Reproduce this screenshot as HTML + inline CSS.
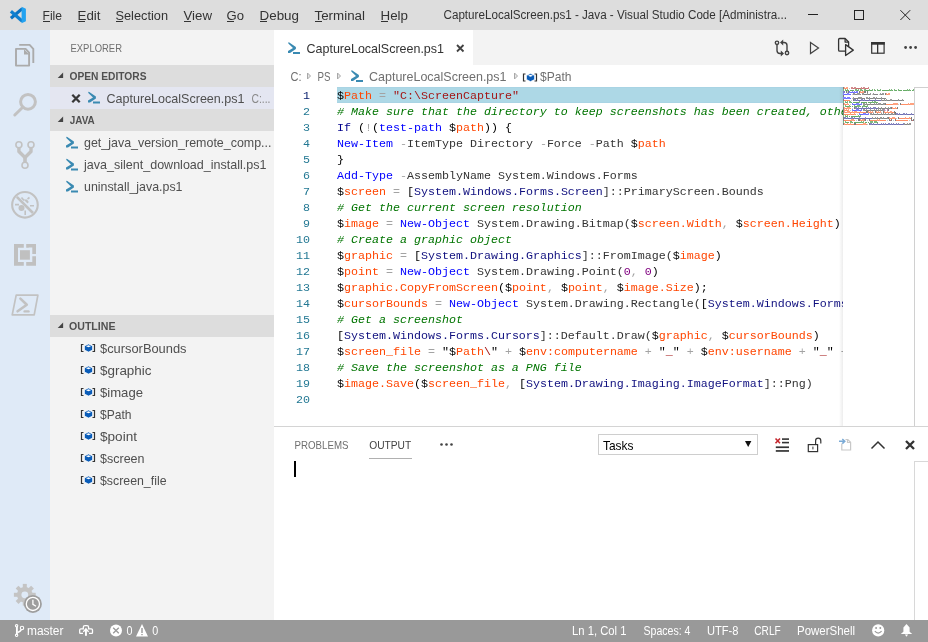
<!DOCTYPE html>
<html><head><meta charset="utf-8"><title>VS Code</title>
<style>html,body{margin:0;padding:0;width:928px;height:642px;overflow:hidden;background:#fff;font-family:"Liberation Sans",sans-serif}</style>
</head><body>
<svg width="928" height="642" viewBox="0 0 928 642" style="display:block;will-change:transform"><rect x="0" y="0" width="928" height="30" fill="#dddddd" />
<rect x="0" y="30" width="50" height="590" fill="#dfeaf7" />
<rect x="50" y="30" width="224" height="590" fill="#f3f3f3" />
<rect x="274" y="30" width="654" height="35" fill="#f3f3f3" />
<rect x="274" y="30" width="199" height="35" fill="#ffffff" />
<rect x="274" y="65" width="654" height="361" fill="#ffffff" />
<rect x="274" y="426" width="654" height="194" fill="#ffffff" />
<rect x="274" y="426" width="654" height="1" fill="#d4d4d4" />
<rect x="0" y="620" width="928" height="22" fill="#999999" />
<g stroke-linecap="butt"><path d="M10.9 18.2 L22.3 8.6" stroke="#0a73c2" stroke-width="3.2"/><path d="M10.9 11.3 L22.3 21.2" stroke="#0e7fd0" stroke-width="3.2"/><path d="M10.2 11.2 L12.8 10 L13.6 13.2 L11.6 14.6 Z M10.2 18.4 L12.8 19.8 L13.6 16.6 L11.6 15.2 Z" fill="#0a6fbd" opacity="0"/><path d="M21.6 6.8 L25.9 8.8 L25.9 21.2 L21.6 23.2 Z" fill="#22a2f0"/></g>
<text x="42.5" y="19.5" font-size="12" fill="#333333" font-family="'Liberation Sans', sans-serif" textLength="19.5" lengthAdjust="spacingAndGlyphs" >File</text>
<rect x="43" y="21" width="7" height="1" fill="#333333"/>
<text x="77.5" y="19.5" font-size="12" fill="#333333" font-family="'Liberation Sans', sans-serif" textLength="23" lengthAdjust="spacingAndGlyphs" >Edit</text>
<rect x="78" y="21" width="7" height="1" fill="#333333"/>
<text x="115.5" y="19.5" font-size="12" fill="#333333" font-family="'Liberation Sans', sans-serif" textLength="52.5" lengthAdjust="spacingAndGlyphs" >Selection</text>
<rect x="116" y="21" width="7" height="1" fill="#333333"/>
<text x="183.5" y="19.5" font-size="12" fill="#333333" font-family="'Liberation Sans', sans-serif" textLength="28.5" lengthAdjust="spacingAndGlyphs" >View</text>
<rect x="184" y="21" width="7" height="1" fill="#333333"/>
<text x="226.5" y="19.5" font-size="12" fill="#333333" font-family="'Liberation Sans', sans-serif" textLength="17.5" lengthAdjust="spacingAndGlyphs" >Go</text>
<rect x="227" y="21" width="7" height="1" fill="#333333"/>
<text x="259.5" y="19.5" font-size="12" fill="#333333" font-family="'Liberation Sans', sans-serif" textLength="39.5" lengthAdjust="spacingAndGlyphs" >Debug</text>
<rect x="260" y="21" width="7" height="1" fill="#333333"/>
<text x="314.5" y="19.5" font-size="12" fill="#333333" font-family="'Liberation Sans', sans-serif" textLength="50.5" lengthAdjust="spacingAndGlyphs" >Terminal</text>
<rect x="315" y="21" width="7" height="1" fill="#333333"/>
<text x="380.5" y="19.5" font-size="12" fill="#333333" font-family="'Liberation Sans', sans-serif" textLength="27.5" lengthAdjust="spacingAndGlyphs" >Help</text>
<rect x="381" y="21" width="7" height="1" fill="#333333"/>
<text x="443.5" y="19.3" font-size="12" fill="#333333" font-family="'Liberation Sans', sans-serif" textLength="343.5" lengthAdjust="spacingAndGlyphs" >CaptureLocalScreen.ps1 - Java - Visual Studio Code [Administra...</text>
<rect x="808" y="14" width="10" height="1" fill="#222222" />
<rect x="854.5" y="10.5" width="9" height="9" fill="none" stroke="#222222" stroke-width="1"/>
<path d="M900.4 10.2 L910.2 20 M910.2 10.2 L900.4 20" stroke="#222222" stroke-width="1"/>
<g fill="none" stroke="#ababab" stroke-width="1.9" stroke-linejoin="round"><path d="M16 48.9 H25.6 L29.1 52.6 V65.6 H16 Z"/><path d="M19.2 44.9 H29.6 L33.3 48.8 V63"/></g><path d="M24 49.3 V54.6 H29.3 Z" fill="#ababab"/>
<g fill="none" stroke="#c2c2c2" stroke-width="3"><circle cx="28" cy="101.8" r="7.4"/><path d="M23 107 L14.8 115" stroke-linecap="round"/></g>
<g fill="none" stroke="#c2c2c2"><g stroke-width="1.6"><circle cx="18.9" cy="144.8" r="3"/><circle cx="31" cy="144.8" r="3"/><circle cx="25" cy="165.3" r="3"/></g><path d="M18.9 147.8 V151.5 L25 157.5 L31 151.5 V147.8" stroke-width="3.4" stroke-linejoin="round"/><path d="M25 156 V162.5" stroke-width="3.6"/></g>
<g fill="none" stroke="#c2c2c2" stroke-width="2.1"><circle cx="24.95" cy="204.8" r="12.8"/><path d="M16.8 196.8 L33 213" stroke-width="2.6"/></g>
<g fill="#c2c2c2"><circle cx="21.5" cy="208" r="3"/><path d="M23.5 199.5 L27.5 203.5 L28.8 202 L27 199.5 Z"/><path d="M27.5 199 L29.5 197.5 M21.5 197.5 L24 200.5 M15 204.6 H19 M30 205.8 H34 M25.2 210.5 V215" stroke="#c2c2c2" stroke-width="1.6" fill="none"/></g>
<g fill="#c0c0c0"><path d="M14 244.1 H23.8 V247.8 H18 V262.1 H23.8 V265.8 H14 Z"/><path d="M26.2 244.1 H36 V253.9 H32.3 V247.5 H28.8 V247.8 H26.2 Z"/><path d="M32.3 256.3 H36 V265.8 H26.2 V262.1 H32.3 Z"/><rect x="20" y="250.2" width="9.9" height="9.5"/></g>
<g fill="none" stroke="#c2c2c2" stroke-linejoin="round" stroke-linecap="round"><path d="M16.2 295.2 H37.9 L34.2 314.8 H12.2 Z" stroke-width="1.7"/><path d="M20.4 298.6 L26.8 304.7 L17.6 311.3" stroke-width="2.6"/><path d="M24.6 311.4 H28.5" stroke-width="2.4"/></g>
<g fill="#c4c4c4"><rect x="22.8" y="583.9" width="4" height="5" transform="rotate(0 24.8 594.8)"/><rect x="22.8" y="583.9" width="4" height="5" transform="rotate(45 24.8 594.8)"/><rect x="22.8" y="583.9" width="4" height="5" transform="rotate(90 24.8 594.8)"/><rect x="22.8" y="583.9" width="4" height="5" transform="rotate(135 24.8 594.8)"/><rect x="22.8" y="583.9" width="4" height="5" transform="rotate(180 24.8 594.8)"/><rect x="22.8" y="583.9" width="4" height="5" transform="rotate(225 24.8 594.8)"/><rect x="22.8" y="583.9" width="4" height="5" transform="rotate(270 24.8 594.8)"/><rect x="22.8" y="583.9" width="4" height="5" transform="rotate(315 24.8 594.8)"/><circle cx="24.8" cy="594.8" r="7.8"/></g><circle cx="24.8" cy="594.8" r="3.4" fill="#dfeaf7"/>
<circle cx="32.9" cy="603.9" r="9.6" fill="#dfeaf7" opacity="0.0"/><circle cx="32.9" cy="603.9" r="9" fill="#9e9e9e"/><circle cx="32.9" cy="603.9" r="6.6" fill="none" stroke="#ffffff" stroke-width="1.3"/><path d="M32.9 599.8 V604.3 L36 606.3" fill="none" stroke="#fff" stroke-width="1.3"/>
<text x="70.5" y="52.2" font-size="11" fill="#6f6f6f" font-family="'Liberation Sans', sans-serif" textLength="51.5" lengthAdjust="spacingAndGlyphs" >EXPLORER</text>
<rect x="50" y="65" width="224" height="22" fill="#dddddd" />
<path d="M57.7 78 L63.1 72.6 L63.1 78 Z" fill="#444444"/>
<text x="69.5" y="79.8" font-size="11" fill="#505050" font-family="'Liberation Sans', sans-serif" font-weight="bold" textLength="77" lengthAdjust="spacingAndGlyphs" >OPEN EDITORS</text>
<rect x="50" y="87" width="224" height="22" fill="#e4e6f1" />
<path d="M72.3 94.8 L79.7 102.2 M79.7 94.8 L72.3 102.2" stroke="#383838" stroke-width="2.3"/>
<g transform="translate(88,91.5)" fill="#3a8ab2"><path d="M0.3 0.2 L1.3 0.4 L7.9 5.1 L7.9 7.0 L2.0 10.9 L0 10.9 L0 8.9 L5.0 6.0 L0.3 1.6 Z"/><rect x="5" y="10" width="7" height="2"/></g>
<text x="106.5" y="103" font-size="13" fill="#4f4f4f" font-family="'Liberation Sans', sans-serif" textLength="138" lengthAdjust="spacingAndGlyphs" >CaptureLocalScreen.ps1</text>
<text x="251.5" y="103" font-size="13" fill="#8a8a8a" font-family="'Liberation Sans', sans-serif" textLength="19" lengthAdjust="spacingAndGlyphs" >C:...</text>
<rect x="50" y="109" width="224" height="22" fill="#dddddd" />
<path d="M57.7 122 L63.1 116.6 L63.1 122 Z" fill="#444444"/>
<text x="69.8" y="123.8" font-size="11" fill="#505050" font-family="'Liberation Sans', sans-serif" font-weight="bold" textLength="25" lengthAdjust="spacingAndGlyphs" >JAVA</text>
<g transform="translate(66,136.5)" fill="#3a8ab2"><path d="M0.3 0.2 L1.3 0.4 L7.9 5.1 L7.9 7.0 L2.0 10.9 L0 10.9 L0 8.9 L5.0 6.0 L0.3 1.6 Z"/><rect x="5" y="10" width="7" height="2"/></g>
<text x="84" y="147" font-size="13" fill="#4f4f4f" font-family="'Liberation Sans', sans-serif" textLength="187.5" lengthAdjust="spacingAndGlyphs" >get_java_version_remote_comp...</text>
<g transform="translate(66,158.5)" fill="#3a8ab2"><path d="M0.3 0.2 L1.3 0.4 L7.9 5.1 L7.9 7.0 L2.0 10.9 L0 10.9 L0 8.9 L5.0 6.0 L0.3 1.6 Z"/><rect x="5" y="10" width="7" height="2"/></g>
<text x="84" y="169" font-size="13" fill="#4f4f4f" font-family="'Liberation Sans', sans-serif" textLength="182.5" lengthAdjust="spacingAndGlyphs" >java_silent_download_install.ps1</text>
<g transform="translate(66,180.5)" fill="#3a8ab2"><path d="M0.3 0.2 L1.3 0.4 L7.9 5.1 L7.9 7.0 L2.0 10.9 L0 10.9 L0 8.9 L5.0 6.0 L0.3 1.6 Z"/><rect x="5" y="10" width="7" height="2"/></g>
<text x="84" y="191" font-size="13" fill="#4f4f4f" font-family="'Liberation Sans', sans-serif" textLength="98.5" lengthAdjust="spacingAndGlyphs" >uninstall_java.ps1</text>
<rect x="50" y="315" width="224" height="22" fill="#dddddd" />
<path d="M57.7 328 L63.1 322.6 L63.1 328 Z" fill="#444444"/>
<text x="69" y="329.8" font-size="11" fill="#505050" font-family="'Liberation Sans', sans-serif" font-weight="bold" textLength="46.5" lengthAdjust="spacingAndGlyphs" >OUTLINE</text>
<g transform="translate(81,344)"><path d="M2.5 0.5 H0.5 V7.5 H2.5 M11.5 0.5 H13.5 V7.5 H11.5" fill="none" stroke="#333" stroke-width="1.2"/><path d="M3.5 2 L7.5 0 L11.5 2 V6 L7.5 8 L3.5 6 Z" fill="#0a5cb8" stroke="#fff" stroke-width="0.6"/><path d="M5 2.2 L7.5 1.2 L10 2.2 L7.5 3.2 Z" fill="#fff"/></g>
<text x="100" y="352.8" font-size="13" fill="#4f4f4f" font-family="'Liberation Sans', sans-serif" textLength="86.5" lengthAdjust="spacingAndGlyphs" >$cursorBounds</text>
<g transform="translate(81,366)"><path d="M2.5 0.5 H0.5 V7.5 H2.5 M11.5 0.5 H13.5 V7.5 H11.5" fill="none" stroke="#333" stroke-width="1.2"/><path d="M3.5 2 L7.5 0 L11.5 2 V6 L7.5 8 L3.5 6 Z" fill="#0a5cb8" stroke="#fff" stroke-width="0.6"/><path d="M5 2.2 L7.5 1.2 L10 2.2 L7.5 3.2 Z" fill="#fff"/></g>
<text x="100" y="374.8" font-size="13" fill="#4f4f4f" font-family="'Liberation Sans', sans-serif" textLength="51.5" lengthAdjust="spacingAndGlyphs" >$graphic</text>
<g transform="translate(81,388)"><path d="M2.5 0.5 H0.5 V7.5 H2.5 M11.5 0.5 H13.5 V7.5 H11.5" fill="none" stroke="#333" stroke-width="1.2"/><path d="M3.5 2 L7.5 0 L11.5 2 V6 L7.5 8 L3.5 6 Z" fill="#0a5cb8" stroke="#fff" stroke-width="0.6"/><path d="M5 2.2 L7.5 1.2 L10 2.2 L7.5 3.2 Z" fill="#fff"/></g>
<text x="100" y="396.8" font-size="13" fill="#4f4f4f" font-family="'Liberation Sans', sans-serif" textLength="43" lengthAdjust="spacingAndGlyphs" >$image</text>
<g transform="translate(81,410)"><path d="M2.5 0.5 H0.5 V7.5 H2.5 M11.5 0.5 H13.5 V7.5 H11.5" fill="none" stroke="#333" stroke-width="1.2"/><path d="M3.5 2 L7.5 0 L11.5 2 V6 L7.5 8 L3.5 6 Z" fill="#0a5cb8" stroke="#fff" stroke-width="0.6"/><path d="M5 2.2 L7.5 1.2 L10 2.2 L7.5 3.2 Z" fill="#fff"/></g>
<text x="100" y="418.8" font-size="13" fill="#4f4f4f" font-family="'Liberation Sans', sans-serif" textLength="31.5" lengthAdjust="spacingAndGlyphs" >$Path</text>
<g transform="translate(81,432)"><path d="M2.5 0.5 H0.5 V7.5 H2.5 M11.5 0.5 H13.5 V7.5 H11.5" fill="none" stroke="#333" stroke-width="1.2"/><path d="M3.5 2 L7.5 0 L11.5 2 V6 L7.5 8 L3.5 6 Z" fill="#0a5cb8" stroke="#fff" stroke-width="0.6"/><path d="M5 2.2 L7.5 1.2 L10 2.2 L7.5 3.2 Z" fill="#fff"/></g>
<text x="100" y="440.8" font-size="13" fill="#4f4f4f" font-family="'Liberation Sans', sans-serif" textLength="37" lengthAdjust="spacingAndGlyphs" >$point</text>
<g transform="translate(81,454)"><path d="M2.5 0.5 H0.5 V7.5 H2.5 M11.5 0.5 H13.5 V7.5 H11.5" fill="none" stroke="#333" stroke-width="1.2"/><path d="M3.5 2 L7.5 0 L11.5 2 V6 L7.5 8 L3.5 6 Z" fill="#0a5cb8" stroke="#fff" stroke-width="0.6"/><path d="M5 2.2 L7.5 1.2 L10 2.2 L7.5 3.2 Z" fill="#fff"/></g>
<text x="100" y="462.8" font-size="13" fill="#4f4f4f" font-family="'Liberation Sans', sans-serif" textLength="44.5" lengthAdjust="spacingAndGlyphs" >$screen</text>
<g transform="translate(81,476)"><path d="M2.5 0.5 H0.5 V7.5 H2.5 M11.5 0.5 H13.5 V7.5 H11.5" fill="none" stroke="#333" stroke-width="1.2"/><path d="M3.5 2 L7.5 0 L11.5 2 V6 L7.5 8 L3.5 6 Z" fill="#0a5cb8" stroke="#fff" stroke-width="0.6"/><path d="M5 2.2 L7.5 1.2 L10 2.2 L7.5 3.2 Z" fill="#fff"/></g>
<text x="100" y="484.8" font-size="13" fill="#4f4f4f" font-family="'Liberation Sans', sans-serif" textLength="66.5" lengthAdjust="spacingAndGlyphs" >$screen_file</text>
<g transform="translate(288,42)" fill="#3a8ab2"><path d="M0.3 0.2 L1.3 0.4 L7.9 5.1 L7.9 7.0 L2.0 10.9 L0 10.9 L0 8.9 L5.0 6.0 L0.3 1.6 Z"/><rect x="5" y="10" width="7" height="2"/></g>
<text x="306.5" y="53" font-size="13" fill="#333333" font-family="'Liberation Sans', sans-serif" textLength="137.5" lengthAdjust="spacingAndGlyphs" >CaptureLocalScreen.ps1</text>
<path d="M457 45 L463.5 51.5 M463.5 45 L457 51.5" stroke="#424242" stroke-width="1.8"/>
<g fill="none" stroke="#424242" stroke-width="1.4"><circle cx="777" cy="42.8" r="1.7"/><circle cx="787" cy="53" r="1.7"/><path d="M777 44.6 V50.5 Q777 53.5 780 53.5 H781.5 M787 51.2 V45.5 Q787 42.5 784 42.5 H782.5"/></g><path d="M780.8 50.5 L784 53.5 L780.8 56.5 Z M783.2 39.5 L780 42.5 L783.2 45.5 Z" fill="#424242"/>
<path d="M810.5 42.5 L818.5 48 L810.5 53.5 Z" fill="none" stroke="#424242" stroke-width="1.2"/>
<g fill="none" stroke="#333" stroke-width="1.3" stroke-linejoin="round"><path d="M845.5 51.2 H839.7 Q838.6 51.2 838.6 50 V39.6 Q838.6 38.5 839.7 38.5 H845.1 L848.6 42 V46.8"/><path d="M845.1 38.5 V42.1 H848.6"/><path d="M845.6 44.6 V55.5 L853.3 50.1 Z" fill="#f3f3f3"/></g>
<g><rect x="871.7" y="42.6" width="12.4" height="10.6" fill="none" stroke="#333" stroke-width="1.2"/><rect x="871.1" y="42" width="13.6" height="2.7" fill="#333"/><rect x="877" y="43" width="1.3" height="10.5" fill="#333"/></g>
<circle cx="905.6" cy="47.5" r="1.4" fill="#424242"/>
<circle cx="910.6" cy="47.5" r="1.4" fill="#424242"/>
<circle cx="915.6" cy="47.5" r="1.4" fill="#424242"/>
<text x="290.5" y="80.7" font-size="12" fill="#6f6f6f" font-family="'Liberation Sans', sans-serif" textLength="11" lengthAdjust="spacingAndGlyphs" >C:</text>
<path d="M307.5 73 L310.5 76 L307.5 79 Z" fill="#e6e6e6" stroke="#a8a8a8" stroke-width="1"/>
<text x="317.5" y="80.7" font-size="12" fill="#6f6f6f" font-family="'Liberation Sans', sans-serif" textLength="13" lengthAdjust="spacingAndGlyphs" >PS</text>
<path d="M337.5 73 L340.5 76 L337.5 79 Z" fill="#e6e6e6" stroke="#a8a8a8" stroke-width="1"/>
<g transform="translate(351,70)" fill="#3a8ab2"><path d="M0.3 0.2 L1.3 0.4 L7.9 5.1 L7.9 7.0 L2.0 10.9 L0 10.9 L0 8.9 L5.0 6.0 L0.3 1.6 Z"/><rect x="5" y="10" width="7" height="2"/></g>
<text x="369" y="80.7" font-size="13" fill="#6f6f6f" font-family="'Liberation Sans', sans-serif" textLength="137.5" lengthAdjust="spacingAndGlyphs" >CaptureLocalScreen.ps1</text>
<path d="M514.5 73 L517.5 76 L514.5 79 Z" fill="#e6e6e6" stroke="#a8a8a8" stroke-width="1"/>
<g transform="translate(523,73.5)"><path d="M2.5 0.5 H0.5 V7.5 H2.5 M11.5 0.5 H13.5 V7.5 H11.5" fill="none" stroke="#333" stroke-width="1.2"/><path d="M3.5 2 L7.5 0 L11.5 2 V6 L7.5 8 L3.5 6 Z" fill="#0a5cb8" stroke="#fff" stroke-width="0.6"/><path d="M5 2.2 L7.5 1.2 L10 2.2 L7.5 3.2 Z" fill="#fff"/></g>
<text x="540" y="80.7" font-size="13" fill="#6f6f6f" font-family="'Liberation Sans', sans-serif" textLength="31.5" lengthAdjust="spacingAndGlyphs" >$Path</text>
<rect x="337" y="87" width="506" height="16" fill="#add8e6" />
<rect x="337" y="87" width="506" height="1" fill="#a9d4e4" />
<rect x="337" y="102" width="506" height="1" fill="#a9d4e4" />
<defs><clipPath id="codeclip"><rect x="274" y="65" width="569" height="361"/></clipPath></defs>
<g clip-path="url(#codeclip)">
<text x="303.0" y="99" font-size="11.667" font-family="'Liberation Mono', monospace" fill="#0b216f">1</text>
<text x="337" y="99" font-size="11.667" font-family="'Liberation Mono', monospace" xml:space="preserve"><tspan fill="#000000">$</tspan><tspan fill="#ff4500">Path</tspan><tspan fill="#a3a3a3"> = </tspan><tspan fill="#a31515">&quot;C:\ScreenCapture&quot;</tspan></text>
<text x="303.0" y="115" font-size="11.667" font-family="'Liberation Mono', monospace" fill="#237893">2</text>
<text x="337" y="115" font-size="11.667" font-family="'Liberation Mono', monospace" xml:space="preserve"><tspan fill="#007400" font-style="italic"># Make sure that the directory to keep screenshots has been created, otherwise create it</tspan></text>
<text x="303.0" y="131" font-size="11.667" font-family="'Liberation Mono', monospace" fill="#237893">3</text>
<text x="337" y="131" font-size="11.667" font-family="'Liberation Mono', monospace" xml:space="preserve"><tspan fill="#00008b">If</tspan><tspan fill="#000000"> (</tspan><tspan fill="#a3a3a3">!</tspan><tspan fill="#000000">(</tspan><tspan fill="#0000ff">test-path</tspan><tspan fill="#000000"> </tspan><tspan fill="#000000">$</tspan><tspan fill="#ff4500">path</tspan><tspan fill="#000000">)) {</tspan></text>
<text x="303.0" y="147" font-size="11.667" font-family="'Liberation Mono', monospace" fill="#237893">4</text>
<text x="337" y="147" font-size="11.667" font-family="'Liberation Mono', monospace" xml:space="preserve"><tspan fill="#0000ff">New-Item</tspan><tspan fill="#a3a3a3"> -</tspan><tspan fill="#333333">ItemType Directory </tspan><tspan fill="#a3a3a3">-</tspan><tspan fill="#333333">Force </tspan><tspan fill="#a3a3a3">-</tspan><tspan fill="#333333">Path </tspan><tspan fill="#000000">$</tspan><tspan fill="#ff4500">path</tspan></text>
<text x="303.0" y="163" font-size="11.667" font-family="'Liberation Mono', monospace" fill="#237893">5</text>
<text x="337" y="163" font-size="11.667" font-family="'Liberation Mono', monospace" xml:space="preserve"><tspan fill="#000000">}</tspan></text>
<text x="303.0" y="179" font-size="11.667" font-family="'Liberation Mono', monospace" fill="#237893">6</text>
<text x="337" y="179" font-size="11.667" font-family="'Liberation Mono', monospace" xml:space="preserve"><tspan fill="#0000ff">Add-Type</tspan><tspan fill="#a3a3a3"> -</tspan><tspan fill="#333333">AssemblyName System.Windows.Forms</tspan></text>
<text x="303.0" y="195" font-size="11.667" font-family="'Liberation Mono', monospace" fill="#237893">7</text>
<text x="337" y="195" font-size="11.667" font-family="'Liberation Mono', monospace" xml:space="preserve"><tspan fill="#000000">$</tspan><tspan fill="#ff4500">screen</tspan><tspan fill="#a3a3a3"> = </tspan><tspan fill="#000000">[</tspan><tspan fill="#10107f">System.Windows.Forms.Screen</tspan><tspan fill="#333333">]::PrimaryScreen.Bounds</tspan></text>
<text x="303.0" y="211" font-size="11.667" font-family="'Liberation Mono', monospace" fill="#237893">8</text>
<text x="337" y="211" font-size="11.667" font-family="'Liberation Mono', monospace" xml:space="preserve"><tspan fill="#007400" font-style="italic"># Get the current screen resolution</tspan></text>
<text x="303.0" y="227" font-size="11.667" font-family="'Liberation Mono', monospace" fill="#237893">9</text>
<text x="337" y="227" font-size="11.667" font-family="'Liberation Mono', monospace" xml:space="preserve"><tspan fill="#000000">$</tspan><tspan fill="#ff4500">image</tspan><tspan fill="#a3a3a3"> = </tspan><tspan fill="#0000ff">New-Object</tspan><tspan fill="#333333"> System.Drawing.Bitmap(</tspan><tspan fill="#000000">$</tspan><tspan fill="#ff4500">screen.Width</tspan><tspan fill="#a3a3a3">, </tspan><tspan fill="#000000">$</tspan><tspan fill="#ff4500">screen.Height</tspan><tspan fill="#000000">)</tspan></text>
<text x="296.0" y="243" font-size="11.667" font-family="'Liberation Mono', monospace" fill="#237893">10</text>
<text x="337" y="243" font-size="11.667" font-family="'Liberation Mono', monospace" xml:space="preserve"><tspan fill="#007400" font-style="italic"># Create a graphic object</tspan></text>
<text x="296.0" y="259" font-size="11.667" font-family="'Liberation Mono', monospace" fill="#237893">11</text>
<text x="337" y="259" font-size="11.667" font-family="'Liberation Mono', monospace" xml:space="preserve"><tspan fill="#000000">$</tspan><tspan fill="#ff4500">graphic</tspan><tspan fill="#a3a3a3"> = </tspan><tspan fill="#000000">[</tspan><tspan fill="#10107f">System.Drawing.Graphics</tspan><tspan fill="#333333">]::FromImage(</tspan><tspan fill="#000000">$</tspan><tspan fill="#ff4500">image</tspan><tspan fill="#000000">)</tspan></text>
<text x="296.0" y="275" font-size="11.667" font-family="'Liberation Mono', monospace" fill="#237893">12</text>
<text x="337" y="275" font-size="11.667" font-family="'Liberation Mono', monospace" xml:space="preserve"><tspan fill="#000000">$</tspan><tspan fill="#ff4500">point</tspan><tspan fill="#a3a3a3"> = </tspan><tspan fill="#0000ff">New-Object</tspan><tspan fill="#333333"> System.Drawing.Point(</tspan><tspan fill="#800080">0</tspan><tspan fill="#a3a3a3">, </tspan><tspan fill="#800080">0</tspan><tspan fill="#000000">)</tspan></text>
<text x="296.0" y="291" font-size="11.667" font-family="'Liberation Mono', monospace" fill="#237893">13</text>
<text x="337" y="291" font-size="11.667" font-family="'Liberation Mono', monospace" xml:space="preserve"><tspan fill="#000000">$</tspan><tspan fill="#ff4500">graphic.CopyFromScreen</tspan><tspan fill="#000000">(</tspan><tspan fill="#000000">$</tspan><tspan fill="#ff4500">point</tspan><tspan fill="#a3a3a3">, </tspan><tspan fill="#000000">$</tspan><tspan fill="#ff4500">point</tspan><tspan fill="#a3a3a3">, </tspan><tspan fill="#000000">$</tspan><tspan fill="#ff4500">image.Size</tspan><tspan fill="#000000">);</tspan></text>
<text x="296.0" y="307" font-size="11.667" font-family="'Liberation Mono', monospace" fill="#237893">14</text>
<text x="337" y="307" font-size="11.667" font-family="'Liberation Mono', monospace" xml:space="preserve"><tspan fill="#000000">$</tspan><tspan fill="#ff4500">cursorBounds</tspan><tspan fill="#a3a3a3"> = </tspan><tspan fill="#0000ff">New-Object</tspan><tspan fill="#333333"> System.Drawing.Rectangle(</tspan><tspan fill="#000000">[</tspan><tspan fill="#10107f">System.Windows.Forms.Cursor</tspan><tspan fill="#333333">]::Position, </tspan><tspan fill="#000000">[</tspan><tspan fill="#10107f">System.Drawing.Size</tspan><tspan fill="#333333">]::new(32, 32))</tspan></text>
<text x="296.0" y="323" font-size="11.667" font-family="'Liberation Mono', monospace" fill="#237893">15</text>
<text x="337" y="323" font-size="11.667" font-family="'Liberation Mono', monospace" xml:space="preserve"><tspan fill="#007400" font-style="italic"># Get a screenshot</tspan></text>
<text x="296.0" y="339" font-size="11.667" font-family="'Liberation Mono', monospace" fill="#237893">16</text>
<text x="337" y="339" font-size="11.667" font-family="'Liberation Mono', monospace" xml:space="preserve"><tspan fill="#000000">[</tspan><tspan fill="#10107f">System.Windows.Forms.Cursors</tspan><tspan fill="#333333">]::Default.Draw(</tspan><tspan fill="#000000">$</tspan><tspan fill="#ff4500">graphic</tspan><tspan fill="#a3a3a3">, </tspan><tspan fill="#000000">$</tspan><tspan fill="#ff4500">cursorBounds</tspan><tspan fill="#000000">)</tspan></text>
<text x="296.0" y="355" font-size="11.667" font-family="'Liberation Mono', monospace" fill="#237893">17</text>
<text x="337" y="355" font-size="11.667" font-family="'Liberation Mono', monospace" xml:space="preserve"><tspan fill="#000000">$</tspan><tspan fill="#ff4500">screen_file</tspan><tspan fill="#a3a3a3"> = </tspan><tspan fill="#000000">&quot;</tspan><tspan fill="#000000">$</tspan><tspan fill="#ff4500">Path</tspan><tspan fill="#a31515">\</tspan><tspan fill="#000000">&quot;</tspan><tspan fill="#a3a3a3"> + </tspan><tspan fill="#000000">$</tspan><tspan fill="#ff4500">env:computername</tspan><tspan fill="#a3a3a3"> + </tspan><tspan fill="#000000">&quot;</tspan><tspan fill="#a31515">_</tspan><tspan fill="#000000">&quot;</tspan><tspan fill="#a3a3a3"> + </tspan><tspan fill="#000000">$</tspan><tspan fill="#ff4500">env:username</tspan><tspan fill="#a3a3a3"> + </tspan><tspan fill="#000000">&quot;</tspan><tspan fill="#a31515">_</tspan><tspan fill="#000000">&quot;</tspan><tspan fill="#a3a3a3"> + </tspan><tspan fill="#000000">$</tspan><tspan fill="#ff4500">date</tspan><tspan fill="#333333">.ToString(</tspan><tspan fill="#a31515">&quot;yyyyMMdd_HHmmss&quot;</tspan><tspan fill="#a3a3a3">) + </tspan><tspan fill="#a31515">&quot;.png&quot;</tspan></text>
<text x="296.0" y="371" font-size="11.667" font-family="'Liberation Mono', monospace" fill="#237893">18</text>
<text x="337" y="371" font-size="11.667" font-family="'Liberation Mono', monospace" xml:space="preserve"><tspan fill="#007400" font-style="italic"># Save the screenshot as a PNG file</tspan></text>
<text x="296.0" y="387" font-size="11.667" font-family="'Liberation Mono', monospace" fill="#237893">19</text>
<text x="337" y="387" font-size="11.667" font-family="'Liberation Mono', monospace" xml:space="preserve"><tspan fill="#000000">$</tspan><tspan fill="#ff4500">image.Save</tspan><tspan fill="#000000">(</tspan><tspan fill="#000000">$</tspan><tspan fill="#ff4500">screen_file</tspan><tspan fill="#a3a3a3">, </tspan><tspan fill="#000000">[</tspan><tspan fill="#10107f">System.Drawing.Imaging.ImageFormat</tspan><tspan fill="#333333">]::Png)</tspan></text>
<text x="296.0" y="403" font-size="11.667" font-family="'Liberation Mono', monospace" fill="#237893">20</text>
</g>
<g>
<rect x="843" y="87" width="1" height="2" fill="#000000" opacity="0.5"/>
<rect x="844" y="87" width="1" height="2" fill="#ff4500" opacity="0.5"/>
<rect x="845" y="88" width="1" height="1" fill="#ff4500" opacity="0.6"/>
<rect x="846" y="87" width="1" height="2" fill="#ff4500" opacity="0.5"/>
<rect x="847" y="87" width="1" height="2" fill="#ff4500" opacity="0.5"/>
<rect x="849" y="88" width="1" height="1" fill="#a3a3a3" opacity="0.6"/>
<rect x="851" y="87" width="1" height="2" fill="#a31515" opacity="0.5"/>
<rect x="852" y="87" width="1" height="2" fill="#a31515" opacity="0.5"/>
<rect x="853" y="88" width="1" height="1" fill="#a31515" opacity="0.6"/>
<rect x="854" y="87" width="1" height="2" fill="#a31515" opacity="0.5"/>
<rect x="855" y="87" width="1" height="2" fill="#a31515" opacity="0.5"/>
<rect x="856" y="88" width="1" height="1" fill="#a31515" opacity="0.6"/>
<rect x="857" y="88" width="1" height="1" fill="#a31515" opacity="0.6"/>
<rect x="858" y="88" width="1" height="1" fill="#a31515" opacity="0.6"/>
<rect x="859" y="88" width="1" height="1" fill="#a31515" opacity="0.6"/>
<rect x="860" y="88" width="1" height="1" fill="#a31515" opacity="0.6"/>
<rect x="861" y="87" width="1" height="2" fill="#a31515" opacity="0.5"/>
<rect x="862" y="88" width="1" height="1" fill="#a31515" opacity="0.6"/>
<rect x="863" y="87" width="1" height="2" fill="#a31515" opacity="0.5"/>
<rect x="864" y="87" width="1" height="2" fill="#a31515" opacity="0.5"/>
<rect x="865" y="88" width="1" height="1" fill="#a31515" opacity="0.6"/>
<rect x="866" y="88" width="1" height="1" fill="#a31515" opacity="0.6"/>
<rect x="867" y="88" width="1" height="1" fill="#a31515" opacity="0.6"/>
<rect x="868" y="87" width="1" height="2" fill="#a31515" opacity="0.5"/>
<rect x="843" y="89" width="1" height="2" fill="#007400" opacity="0.5"/>
<rect x="845" y="89" width="1" height="2" fill="#007400" opacity="0.5"/>
<rect x="846" y="90" width="1" height="1" fill="#007400" opacity="0.6"/>
<rect x="847" y="89" width="1" height="2" fill="#007400" opacity="0.5"/>
<rect x="848" y="90" width="1" height="1" fill="#007400" opacity="0.6"/>
<rect x="850" y="90" width="1" height="1" fill="#007400" opacity="0.6"/>
<rect x="851" y="90" width="1" height="1" fill="#007400" opacity="0.6"/>
<rect x="852" y="90" width="1" height="1" fill="#007400" opacity="0.6"/>
<rect x="853" y="90" width="1" height="1" fill="#007400" opacity="0.6"/>
<rect x="855" y="89" width="1" height="2" fill="#007400" opacity="0.5"/>
<rect x="856" y="89" width="1" height="2" fill="#007400" opacity="0.5"/>
<rect x="857" y="90" width="1" height="1" fill="#007400" opacity="0.6"/>
<rect x="858" y="89" width="1" height="2" fill="#007400" opacity="0.5"/>
<rect x="860" y="89" width="1" height="2" fill="#007400" opacity="0.5"/>
<rect x="861" y="89" width="1" height="2" fill="#007400" opacity="0.5"/>
<rect x="862" y="90" width="1" height="1" fill="#007400" opacity="0.6"/>
<rect x="864" y="89" width="1" height="2" fill="#007400" opacity="0.5"/>
<rect x="865" y="89" width="1" height="2" fill="#007400" opacity="0.5"/>
<rect x="866" y="90" width="1" height="1" fill="#007400" opacity="0.6"/>
<rect x="867" y="90" width="1" height="1" fill="#007400" opacity="0.6"/>
<rect x="868" y="90" width="1" height="1" fill="#007400" opacity="0.6"/>
<rect x="869" y="89" width="1" height="2" fill="#007400" opacity="0.5"/>
<rect x="870" y="90" width="1" height="1" fill="#007400" opacity="0.6"/>
<rect x="871" y="90" width="1" height="1" fill="#007400" opacity="0.6"/>
<rect x="872" y="89" width="1" height="2" fill="#007400" opacity="0.5"/>
<rect x="874" y="89" width="1" height="2" fill="#007400" opacity="0.5"/>
<rect x="875" y="90" width="1" height="1" fill="#007400" opacity="0.6"/>
<rect x="877" y="89" width="1" height="2" fill="#007400" opacity="0.5"/>
<rect x="878" y="90" width="1" height="1" fill="#007400" opacity="0.6"/>
<rect x="879" y="90" width="1" height="1" fill="#007400" opacity="0.6"/>
<rect x="880" y="89" width="1" height="2" fill="#007400" opacity="0.5"/>
<rect x="882" y="90" width="1" height="1" fill="#007400" opacity="0.6"/>
<rect x="883" y="90" width="1" height="1" fill="#007400" opacity="0.6"/>
<rect x="884" y="90" width="1" height="1" fill="#007400" opacity="0.6"/>
<rect x="885" y="90" width="1" height="1" fill="#007400" opacity="0.6"/>
<rect x="886" y="90" width="1" height="1" fill="#007400" opacity="0.6"/>
<rect x="887" y="90" width="1" height="1" fill="#007400" opacity="0.6"/>
<rect x="888" y="90" width="1" height="1" fill="#007400" opacity="0.6"/>
<rect x="889" y="89" width="1" height="2" fill="#007400" opacity="0.5"/>
<rect x="890" y="90" width="1" height="1" fill="#007400" opacity="0.6"/>
<rect x="891" y="89" width="1" height="2" fill="#007400" opacity="0.5"/>
<rect x="892" y="90" width="1" height="1" fill="#007400" opacity="0.6"/>
<rect x="894" y="89" width="1" height="2" fill="#007400" opacity="0.5"/>
<rect x="895" y="90" width="1" height="1" fill="#007400" opacity="0.6"/>
<rect x="896" y="90" width="1" height="1" fill="#007400" opacity="0.6"/>
<rect x="898" y="89" width="1" height="2" fill="#007400" opacity="0.5"/>
<rect x="899" y="90" width="1" height="1" fill="#007400" opacity="0.6"/>
<rect x="900" y="90" width="1" height="1" fill="#007400" opacity="0.6"/>
<rect x="901" y="90" width="1" height="1" fill="#007400" opacity="0.6"/>
<rect x="903" y="90" width="1" height="1" fill="#007400" opacity="0.6"/>
<rect x="904" y="90" width="1" height="1" fill="#007400" opacity="0.6"/>
<rect x="905" y="90" width="1" height="1" fill="#007400" opacity="0.6"/>
<rect x="906" y="90" width="1" height="1" fill="#007400" opacity="0.6"/>
<rect x="907" y="89" width="1" height="2" fill="#007400" opacity="0.5"/>
<rect x="908" y="90" width="1" height="1" fill="#007400" opacity="0.6"/>
<rect x="909" y="89" width="1" height="2" fill="#007400" opacity="0.5"/>
<rect x="910" y="90" width="1" height="1" fill="#007400" opacity="0.6"/>
<rect x="912" y="90" width="1" height="1" fill="#007400" opacity="0.6"/>
<rect x="913" y="89" width="1" height="2" fill="#007400" opacity="0.5"/>
<rect x="843" y="91" width="1" height="2" fill="#00008b" opacity="0.5"/>
<rect x="844" y="91" width="1" height="2" fill="#00008b" opacity="0.5"/>
<rect x="846" y="91" width="1" height="2" fill="#000000" opacity="0.5"/>
<rect x="847" y="91" width="1" height="2" fill="#a3a3a3" opacity="0.5"/>
<rect x="848" y="91" width="1" height="2" fill="#000000" opacity="0.5"/>
<rect x="849" y="91" width="1" height="2" fill="#0000ff" opacity="0.5"/>
<rect x="850" y="92" width="1" height="1" fill="#0000ff" opacity="0.6"/>
<rect x="851" y="92" width="1" height="1" fill="#0000ff" opacity="0.6"/>
<rect x="852" y="91" width="1" height="2" fill="#0000ff" opacity="0.5"/>
<rect x="853" y="92" width="1" height="1" fill="#0000ff" opacity="0.6"/>
<rect x="854" y="91" width="1" height="2" fill="#0000ff" opacity="0.5"/>
<rect x="855" y="92" width="1" height="1" fill="#0000ff" opacity="0.6"/>
<rect x="856" y="91" width="1" height="2" fill="#0000ff" opacity="0.5"/>
<rect x="857" y="91" width="1" height="2" fill="#0000ff" opacity="0.5"/>
<rect x="859" y="91" width="1" height="2" fill="#000000" opacity="0.5"/>
<rect x="860" y="91" width="1" height="2" fill="#ff4500" opacity="0.5"/>
<rect x="861" y="92" width="1" height="1" fill="#ff4500" opacity="0.6"/>
<rect x="862" y="91" width="1" height="2" fill="#ff4500" opacity="0.5"/>
<rect x="863" y="91" width="1" height="2" fill="#ff4500" opacity="0.5"/>
<rect x="864" y="91" width="1" height="2" fill="#000000" opacity="0.5"/>
<rect x="865" y="91" width="1" height="2" fill="#000000" opacity="0.5"/>
<rect x="867" y="91" width="1" height="2" fill="#000000" opacity="0.5"/>
<rect x="843" y="93" width="1" height="2" fill="#0000ff" opacity="0.5"/>
<rect x="844" y="94" width="1" height="1" fill="#0000ff" opacity="0.6"/>
<rect x="845" y="94" width="1" height="1" fill="#0000ff" opacity="0.6"/>
<rect x="846" y="94" width="1" height="1" fill="#0000ff" opacity="0.6"/>
<rect x="847" y="93" width="1" height="2" fill="#0000ff" opacity="0.5"/>
<rect x="848" y="93" width="1" height="2" fill="#0000ff" opacity="0.5"/>
<rect x="849" y="94" width="1" height="1" fill="#0000ff" opacity="0.6"/>
<rect x="850" y="94" width="1" height="1" fill="#0000ff" opacity="0.6"/>
<rect x="852" y="94" width="1" height="1" fill="#a3a3a3" opacity="0.6"/>
<rect x="853" y="93" width="1" height="2" fill="#333333" opacity="0.5"/>
<rect x="854" y="93" width="1" height="2" fill="#333333" opacity="0.5"/>
<rect x="855" y="94" width="1" height="1" fill="#333333" opacity="0.6"/>
<rect x="856" y="94" width="1" height="1" fill="#333333" opacity="0.6"/>
<rect x="857" y="93" width="1" height="2" fill="#333333" opacity="0.5"/>
<rect x="858" y="93" width="1" height="2" fill="#333333" opacity="0.5"/>
<rect x="859" y="93" width="1" height="2" fill="#333333" opacity="0.5"/>
<rect x="860" y="94" width="1" height="1" fill="#333333" opacity="0.6"/>
<rect x="862" y="93" width="1" height="2" fill="#333333" opacity="0.5"/>
<rect x="863" y="93" width="1" height="2" fill="#333333" opacity="0.5"/>
<rect x="864" y="94" width="1" height="1" fill="#333333" opacity="0.6"/>
<rect x="865" y="94" width="1" height="1" fill="#333333" opacity="0.6"/>
<rect x="866" y="94" width="1" height="1" fill="#333333" opacity="0.6"/>
<rect x="867" y="93" width="1" height="2" fill="#333333" opacity="0.5"/>
<rect x="868" y="94" width="1" height="1" fill="#333333" opacity="0.6"/>
<rect x="869" y="94" width="1" height="1" fill="#333333" opacity="0.6"/>
<rect x="870" y="93" width="1" height="2" fill="#333333" opacity="0.5"/>
<rect x="872" y="94" width="1" height="1" fill="#a3a3a3" opacity="0.6"/>
<rect x="873" y="93" width="1" height="2" fill="#333333" opacity="0.5"/>
<rect x="874" y="94" width="1" height="1" fill="#333333" opacity="0.6"/>
<rect x="875" y="94" width="1" height="1" fill="#333333" opacity="0.6"/>
<rect x="876" y="94" width="1" height="1" fill="#333333" opacity="0.6"/>
<rect x="877" y="94" width="1" height="1" fill="#333333" opacity="0.6"/>
<rect x="879" y="94" width="1" height="1" fill="#a3a3a3" opacity="0.6"/>
<rect x="880" y="93" width="1" height="2" fill="#333333" opacity="0.5"/>
<rect x="881" y="94" width="1" height="1" fill="#333333" opacity="0.6"/>
<rect x="882" y="93" width="1" height="2" fill="#333333" opacity="0.5"/>
<rect x="883" y="93" width="1" height="2" fill="#333333" opacity="0.5"/>
<rect x="885" y="93" width="1" height="2" fill="#000000" opacity="0.5"/>
<rect x="886" y="93" width="1" height="2" fill="#ff4500" opacity="0.5"/>
<rect x="887" y="94" width="1" height="1" fill="#ff4500" opacity="0.6"/>
<rect x="888" y="93" width="1" height="2" fill="#ff4500" opacity="0.5"/>
<rect x="889" y="93" width="1" height="2" fill="#ff4500" opacity="0.5"/>
<rect x="843" y="95" width="1" height="2" fill="#000000" opacity="0.5"/>
<rect x="843" y="97" width="1" height="2" fill="#0000ff" opacity="0.5"/>
<rect x="844" y="97" width="1" height="2" fill="#0000ff" opacity="0.5"/>
<rect x="845" y="97" width="1" height="2" fill="#0000ff" opacity="0.5"/>
<rect x="846" y="98" width="1" height="1" fill="#0000ff" opacity="0.6"/>
<rect x="847" y="97" width="1" height="2" fill="#0000ff" opacity="0.5"/>
<rect x="848" y="97" width="1" height="2" fill="#0000ff" opacity="0.5"/>
<rect x="849" y="97" width="1" height="2" fill="#0000ff" opacity="0.5"/>
<rect x="850" y="98" width="1" height="1" fill="#0000ff" opacity="0.6"/>
<rect x="852" y="98" width="1" height="1" fill="#a3a3a3" opacity="0.6"/>
<rect x="853" y="97" width="1" height="2" fill="#333333" opacity="0.5"/>
<rect x="854" y="98" width="1" height="1" fill="#333333" opacity="0.6"/>
<rect x="855" y="98" width="1" height="1" fill="#333333" opacity="0.6"/>
<rect x="856" y="98" width="1" height="1" fill="#333333" opacity="0.6"/>
<rect x="857" y="98" width="1" height="1" fill="#333333" opacity="0.6"/>
<rect x="858" y="97" width="1" height="2" fill="#333333" opacity="0.5"/>
<rect x="859" y="97" width="1" height="2" fill="#333333" opacity="0.5"/>
<rect x="860" y="97" width="1" height="2" fill="#333333" opacity="0.5"/>
<rect x="861" y="97" width="1" height="2" fill="#333333" opacity="0.5"/>
<rect x="862" y="98" width="1" height="1" fill="#333333" opacity="0.6"/>
<rect x="863" y="98" width="1" height="1" fill="#333333" opacity="0.6"/>
<rect x="864" y="98" width="1" height="1" fill="#333333" opacity="0.6"/>
<rect x="866" y="97" width="1" height="2" fill="#333333" opacity="0.5"/>
<rect x="867" y="97" width="1" height="2" fill="#333333" opacity="0.5"/>
<rect x="868" y="98" width="1" height="1" fill="#333333" opacity="0.6"/>
<rect x="869" y="97" width="1" height="2" fill="#333333" opacity="0.5"/>
<rect x="870" y="98" width="1" height="1" fill="#333333" opacity="0.6"/>
<rect x="871" y="98" width="1" height="1" fill="#333333" opacity="0.6"/>
<rect x="872" y="98" width="1" height="1" fill="#333333" opacity="0.6"/>
<rect x="873" y="97" width="1" height="2" fill="#333333" opacity="0.5"/>
<rect x="874" y="97" width="1" height="2" fill="#333333" opacity="0.5"/>
<rect x="875" y="98" width="1" height="1" fill="#333333" opacity="0.6"/>
<rect x="876" y="97" width="1" height="2" fill="#333333" opacity="0.5"/>
<rect x="877" y="98" width="1" height="1" fill="#333333" opacity="0.6"/>
<rect x="878" y="98" width="1" height="1" fill="#333333" opacity="0.6"/>
<rect x="879" y="98" width="1" height="1" fill="#333333" opacity="0.6"/>
<rect x="880" y="98" width="1" height="1" fill="#333333" opacity="0.6"/>
<rect x="881" y="97" width="1" height="2" fill="#333333" opacity="0.5"/>
<rect x="882" y="98" width="1" height="1" fill="#333333" opacity="0.6"/>
<rect x="883" y="98" width="1" height="1" fill="#333333" opacity="0.6"/>
<rect x="884" y="98" width="1" height="1" fill="#333333" opacity="0.6"/>
<rect x="885" y="98" width="1" height="1" fill="#333333" opacity="0.6"/>
<rect x="843" y="99" width="1" height="2" fill="#000000" opacity="0.5"/>
<rect x="844" y="100" width="1" height="1" fill="#ff4500" opacity="0.6"/>
<rect x="845" y="100" width="1" height="1" fill="#ff4500" opacity="0.6"/>
<rect x="846" y="100" width="1" height="1" fill="#ff4500" opacity="0.6"/>
<rect x="847" y="100" width="1" height="1" fill="#ff4500" opacity="0.6"/>
<rect x="848" y="100" width="1" height="1" fill="#ff4500" opacity="0.6"/>
<rect x="849" y="100" width="1" height="1" fill="#ff4500" opacity="0.6"/>
<rect x="851" y="100" width="1" height="1" fill="#a3a3a3" opacity="0.6"/>
<rect x="853" y="99" width="1" height="2" fill="#000000" opacity="0.5"/>
<rect x="854" y="99" width="1" height="2" fill="#10107f" opacity="0.5"/>
<rect x="855" y="99" width="1" height="2" fill="#10107f" opacity="0.5"/>
<rect x="856" y="100" width="1" height="1" fill="#10107f" opacity="0.6"/>
<rect x="857" y="99" width="1" height="2" fill="#10107f" opacity="0.5"/>
<rect x="858" y="100" width="1" height="1" fill="#10107f" opacity="0.6"/>
<rect x="859" y="100" width="1" height="1" fill="#10107f" opacity="0.6"/>
<rect x="860" y="100" width="1" height="1" fill="#10107f" opacity="0.6"/>
<rect x="861" y="99" width="1" height="2" fill="#10107f" opacity="0.5"/>
<rect x="862" y="99" width="1" height="2" fill="#10107f" opacity="0.5"/>
<rect x="863" y="100" width="1" height="1" fill="#10107f" opacity="0.6"/>
<rect x="864" y="99" width="1" height="2" fill="#10107f" opacity="0.5"/>
<rect x="865" y="100" width="1" height="1" fill="#10107f" opacity="0.6"/>
<rect x="866" y="100" width="1" height="1" fill="#10107f" opacity="0.6"/>
<rect x="867" y="100" width="1" height="1" fill="#10107f" opacity="0.6"/>
<rect x="868" y="100" width="1" height="1" fill="#10107f" opacity="0.6"/>
<rect x="869" y="99" width="1" height="2" fill="#10107f" opacity="0.5"/>
<rect x="870" y="100" width="1" height="1" fill="#10107f" opacity="0.6"/>
<rect x="871" y="100" width="1" height="1" fill="#10107f" opacity="0.6"/>
<rect x="872" y="100" width="1" height="1" fill="#10107f" opacity="0.6"/>
<rect x="873" y="100" width="1" height="1" fill="#10107f" opacity="0.6"/>
<rect x="874" y="100" width="1" height="1" fill="#10107f" opacity="0.6"/>
<rect x="875" y="99" width="1" height="2" fill="#10107f" opacity="0.5"/>
<rect x="876" y="100" width="1" height="1" fill="#10107f" opacity="0.6"/>
<rect x="877" y="100" width="1" height="1" fill="#10107f" opacity="0.6"/>
<rect x="878" y="100" width="1" height="1" fill="#10107f" opacity="0.6"/>
<rect x="879" y="100" width="1" height="1" fill="#10107f" opacity="0.6"/>
<rect x="880" y="100" width="1" height="1" fill="#10107f" opacity="0.6"/>
<rect x="881" y="99" width="1" height="2" fill="#333333" opacity="0.5"/>
<rect x="882" y="100" width="1" height="1" fill="#333333" opacity="0.6"/>
<rect x="883" y="100" width="1" height="1" fill="#333333" opacity="0.6"/>
<rect x="884" y="99" width="1" height="2" fill="#333333" opacity="0.5"/>
<rect x="885" y="100" width="1" height="1" fill="#333333" opacity="0.6"/>
<rect x="886" y="99" width="1" height="2" fill="#333333" opacity="0.5"/>
<rect x="887" y="100" width="1" height="1" fill="#333333" opacity="0.6"/>
<rect x="888" y="100" width="1" height="1" fill="#333333" opacity="0.6"/>
<rect x="889" y="100" width="1" height="1" fill="#333333" opacity="0.6"/>
<rect x="890" y="99" width="1" height="2" fill="#333333" opacity="0.5"/>
<rect x="891" y="99" width="1" height="2" fill="#333333" opacity="0.5"/>
<rect x="892" y="100" width="1" height="1" fill="#333333" opacity="0.6"/>
<rect x="893" y="100" width="1" height="1" fill="#333333" opacity="0.6"/>
<rect x="894" y="100" width="1" height="1" fill="#333333" opacity="0.6"/>
<rect x="895" y="100" width="1" height="1" fill="#333333" opacity="0.6"/>
<rect x="896" y="100" width="1" height="1" fill="#333333" opacity="0.6"/>
<rect x="897" y="100" width="1" height="1" fill="#333333" opacity="0.6"/>
<rect x="898" y="99" width="1" height="2" fill="#333333" opacity="0.5"/>
<rect x="899" y="100" width="1" height="1" fill="#333333" opacity="0.6"/>
<rect x="900" y="100" width="1" height="1" fill="#333333" opacity="0.6"/>
<rect x="901" y="100" width="1" height="1" fill="#333333" opacity="0.6"/>
<rect x="902" y="99" width="1" height="2" fill="#333333" opacity="0.5"/>
<rect x="903" y="100" width="1" height="1" fill="#333333" opacity="0.6"/>
<rect x="843" y="101" width="1" height="2" fill="#007400" opacity="0.5"/>
<rect x="845" y="101" width="1" height="2" fill="#007400" opacity="0.5"/>
<rect x="846" y="102" width="1" height="1" fill="#007400" opacity="0.6"/>
<rect x="847" y="101" width="1" height="2" fill="#007400" opacity="0.5"/>
<rect x="849" y="101" width="1" height="2" fill="#007400" opacity="0.5"/>
<rect x="850" y="101" width="1" height="2" fill="#007400" opacity="0.5"/>
<rect x="851" y="102" width="1" height="1" fill="#007400" opacity="0.6"/>
<rect x="853" y="102" width="1" height="1" fill="#007400" opacity="0.6"/>
<rect x="854" y="102" width="1" height="1" fill="#007400" opacity="0.6"/>
<rect x="855" y="102" width="1" height="1" fill="#007400" opacity="0.6"/>
<rect x="856" y="102" width="1" height="1" fill="#007400" opacity="0.6"/>
<rect x="857" y="102" width="1" height="1" fill="#007400" opacity="0.6"/>
<rect x="858" y="102" width="1" height="1" fill="#007400" opacity="0.6"/>
<rect x="859" y="101" width="1" height="2" fill="#007400" opacity="0.5"/>
<rect x="861" y="102" width="1" height="1" fill="#007400" opacity="0.6"/>
<rect x="862" y="102" width="1" height="1" fill="#007400" opacity="0.6"/>
<rect x="863" y="102" width="1" height="1" fill="#007400" opacity="0.6"/>
<rect x="864" y="102" width="1" height="1" fill="#007400" opacity="0.6"/>
<rect x="865" y="102" width="1" height="1" fill="#007400" opacity="0.6"/>
<rect x="866" y="102" width="1" height="1" fill="#007400" opacity="0.6"/>
<rect x="868" y="102" width="1" height="1" fill="#007400" opacity="0.6"/>
<rect x="869" y="102" width="1" height="1" fill="#007400" opacity="0.6"/>
<rect x="870" y="102" width="1" height="1" fill="#007400" opacity="0.6"/>
<rect x="871" y="102" width="1" height="1" fill="#007400" opacity="0.6"/>
<rect x="872" y="101" width="1" height="2" fill="#007400" opacity="0.5"/>
<rect x="873" y="102" width="1" height="1" fill="#007400" opacity="0.6"/>
<rect x="874" y="101" width="1" height="2" fill="#007400" opacity="0.5"/>
<rect x="875" y="101" width="1" height="2" fill="#007400" opacity="0.5"/>
<rect x="876" y="102" width="1" height="1" fill="#007400" opacity="0.6"/>
<rect x="877" y="102" width="1" height="1" fill="#007400" opacity="0.6"/>
<rect x="843" y="103" width="1" height="2" fill="#000000" opacity="0.5"/>
<rect x="844" y="103" width="1" height="2" fill="#ff4500" opacity="0.5"/>
<rect x="845" y="104" width="1" height="1" fill="#ff4500" opacity="0.6"/>
<rect x="846" y="104" width="1" height="1" fill="#ff4500" opacity="0.6"/>
<rect x="847" y="103" width="1" height="2" fill="#ff4500" opacity="0.5"/>
<rect x="848" y="104" width="1" height="1" fill="#ff4500" opacity="0.6"/>
<rect x="850" y="104" width="1" height="1" fill="#a3a3a3" opacity="0.6"/>
<rect x="852" y="103" width="1" height="2" fill="#0000ff" opacity="0.5"/>
<rect x="853" y="104" width="1" height="1" fill="#0000ff" opacity="0.6"/>
<rect x="854" y="104" width="1" height="1" fill="#0000ff" opacity="0.6"/>
<rect x="855" y="104" width="1" height="1" fill="#0000ff" opacity="0.6"/>
<rect x="856" y="103" width="1" height="2" fill="#0000ff" opacity="0.5"/>
<rect x="857" y="103" width="1" height="2" fill="#0000ff" opacity="0.5"/>
<rect x="858" y="103" width="1" height="2" fill="#0000ff" opacity="0.5"/>
<rect x="859" y="104" width="1" height="1" fill="#0000ff" opacity="0.6"/>
<rect x="860" y="104" width="1" height="1" fill="#0000ff" opacity="0.6"/>
<rect x="861" y="103" width="1" height="2" fill="#0000ff" opacity="0.5"/>
<rect x="863" y="103" width="1" height="2" fill="#333333" opacity="0.5"/>
<rect x="864" y="103" width="1" height="2" fill="#333333" opacity="0.5"/>
<rect x="865" y="104" width="1" height="1" fill="#333333" opacity="0.6"/>
<rect x="866" y="103" width="1" height="2" fill="#333333" opacity="0.5"/>
<rect x="867" y="104" width="1" height="1" fill="#333333" opacity="0.6"/>
<rect x="868" y="104" width="1" height="1" fill="#333333" opacity="0.6"/>
<rect x="869" y="104" width="1" height="1" fill="#333333" opacity="0.6"/>
<rect x="870" y="103" width="1" height="2" fill="#333333" opacity="0.5"/>
<rect x="871" y="104" width="1" height="1" fill="#333333" opacity="0.6"/>
<rect x="872" y="104" width="1" height="1" fill="#333333" opacity="0.6"/>
<rect x="873" y="104" width="1" height="1" fill="#333333" opacity="0.6"/>
<rect x="874" y="103" width="1" height="2" fill="#333333" opacity="0.5"/>
<rect x="875" y="104" width="1" height="1" fill="#333333" opacity="0.6"/>
<rect x="876" y="103" width="1" height="2" fill="#333333" opacity="0.5"/>
<rect x="877" y="104" width="1" height="1" fill="#333333" opacity="0.6"/>
<rect x="878" y="103" width="1" height="2" fill="#333333" opacity="0.5"/>
<rect x="879" y="103" width="1" height="2" fill="#333333" opacity="0.5"/>
<rect x="880" y="103" width="1" height="2" fill="#333333" opacity="0.5"/>
<rect x="881" y="104" width="1" height="1" fill="#333333" opacity="0.6"/>
<rect x="882" y="104" width="1" height="1" fill="#333333" opacity="0.6"/>
<rect x="883" y="103" width="1" height="2" fill="#333333" opacity="0.5"/>
<rect x="884" y="103" width="1" height="2" fill="#333333" opacity="0.5"/>
<rect x="885" y="103" width="1" height="2" fill="#000000" opacity="0.5"/>
<rect x="886" y="104" width="1" height="1" fill="#ff4500" opacity="0.6"/>
<rect x="887" y="104" width="1" height="1" fill="#ff4500" opacity="0.6"/>
<rect x="888" y="104" width="1" height="1" fill="#ff4500" opacity="0.6"/>
<rect x="889" y="104" width="1" height="1" fill="#ff4500" opacity="0.6"/>
<rect x="890" y="104" width="1" height="1" fill="#ff4500" opacity="0.6"/>
<rect x="891" y="104" width="1" height="1" fill="#ff4500" opacity="0.6"/>
<rect x="892" y="104" width="1" height="1" fill="#ff4500" opacity="0.6"/>
<rect x="893" y="103" width="1" height="2" fill="#ff4500" opacity="0.5"/>
<rect x="894" y="103" width="1" height="2" fill="#ff4500" opacity="0.5"/>
<rect x="895" y="103" width="1" height="2" fill="#ff4500" opacity="0.5"/>
<rect x="896" y="103" width="1" height="2" fill="#ff4500" opacity="0.5"/>
<rect x="897" y="103" width="1" height="2" fill="#ff4500" opacity="0.5"/>
<rect x="898" y="104" width="1" height="1" fill="#a3a3a3" opacity="0.6"/>
<rect x="900" y="103" width="1" height="2" fill="#000000" opacity="0.5"/>
<rect x="901" y="104" width="1" height="1" fill="#ff4500" opacity="0.6"/>
<rect x="902" y="104" width="1" height="1" fill="#ff4500" opacity="0.6"/>
<rect x="903" y="104" width="1" height="1" fill="#ff4500" opacity="0.6"/>
<rect x="904" y="104" width="1" height="1" fill="#ff4500" opacity="0.6"/>
<rect x="905" y="104" width="1" height="1" fill="#ff4500" opacity="0.6"/>
<rect x="906" y="104" width="1" height="1" fill="#ff4500" opacity="0.6"/>
<rect x="907" y="104" width="1" height="1" fill="#ff4500" opacity="0.6"/>
<rect x="908" y="103" width="1" height="2" fill="#ff4500" opacity="0.5"/>
<rect x="909" y="104" width="1" height="1" fill="#ff4500" opacity="0.6"/>
<rect x="910" y="103" width="1" height="2" fill="#ff4500" opacity="0.5"/>
<rect x="911" y="103" width="1" height="2" fill="#ff4500" opacity="0.5"/>
<rect x="912" y="103" width="1" height="2" fill="#ff4500" opacity="0.5"/>
<rect x="913" y="103" width="1" height="2" fill="#ff4500" opacity="0.5"/>
<rect x="843" y="105" width="1" height="2" fill="#007400" opacity="0.5"/>
<rect x="845" y="105" width="1" height="2" fill="#007400" opacity="0.5"/>
<rect x="846" y="106" width="1" height="1" fill="#007400" opacity="0.6"/>
<rect x="847" y="106" width="1" height="1" fill="#007400" opacity="0.6"/>
<rect x="848" y="106" width="1" height="1" fill="#007400" opacity="0.6"/>
<rect x="849" y="105" width="1" height="2" fill="#007400" opacity="0.5"/>
<rect x="850" y="106" width="1" height="1" fill="#007400" opacity="0.6"/>
<rect x="852" y="106" width="1" height="1" fill="#007400" opacity="0.6"/>
<rect x="854" y="105" width="1" height="2" fill="#007400" opacity="0.5"/>
<rect x="855" y="106" width="1" height="1" fill="#007400" opacity="0.6"/>
<rect x="856" y="106" width="1" height="1" fill="#007400" opacity="0.6"/>
<rect x="857" y="105" width="1" height="2" fill="#007400" opacity="0.5"/>
<rect x="858" y="105" width="1" height="2" fill="#007400" opacity="0.5"/>
<rect x="859" y="105" width="1" height="2" fill="#007400" opacity="0.5"/>
<rect x="860" y="106" width="1" height="1" fill="#007400" opacity="0.6"/>
<rect x="862" y="106" width="1" height="1" fill="#007400" opacity="0.6"/>
<rect x="863" y="105" width="1" height="2" fill="#007400" opacity="0.5"/>
<rect x="864" y="105" width="1" height="2" fill="#007400" opacity="0.5"/>
<rect x="865" y="106" width="1" height="1" fill="#007400" opacity="0.6"/>
<rect x="866" y="106" width="1" height="1" fill="#007400" opacity="0.6"/>
<rect x="867" y="105" width="1" height="2" fill="#007400" opacity="0.5"/>
<rect x="843" y="107" width="1" height="2" fill="#000000" opacity="0.5"/>
<rect x="844" y="107" width="1" height="2" fill="#ff4500" opacity="0.5"/>
<rect x="845" y="108" width="1" height="1" fill="#ff4500" opacity="0.6"/>
<rect x="846" y="108" width="1" height="1" fill="#ff4500" opacity="0.6"/>
<rect x="847" y="107" width="1" height="2" fill="#ff4500" opacity="0.5"/>
<rect x="848" y="107" width="1" height="2" fill="#ff4500" opacity="0.5"/>
<rect x="849" y="107" width="1" height="2" fill="#ff4500" opacity="0.5"/>
<rect x="850" y="108" width="1" height="1" fill="#ff4500" opacity="0.6"/>
<rect x="852" y="108" width="1" height="1" fill="#a3a3a3" opacity="0.6"/>
<rect x="854" y="107" width="1" height="2" fill="#000000" opacity="0.5"/>
<rect x="855" y="107" width="1" height="2" fill="#10107f" opacity="0.5"/>
<rect x="856" y="107" width="1" height="2" fill="#10107f" opacity="0.5"/>
<rect x="857" y="108" width="1" height="1" fill="#10107f" opacity="0.6"/>
<rect x="858" y="107" width="1" height="2" fill="#10107f" opacity="0.5"/>
<rect x="859" y="108" width="1" height="1" fill="#10107f" opacity="0.6"/>
<rect x="860" y="108" width="1" height="1" fill="#10107f" opacity="0.6"/>
<rect x="861" y="108" width="1" height="1" fill="#10107f" opacity="0.6"/>
<rect x="862" y="107" width="1" height="2" fill="#10107f" opacity="0.5"/>
<rect x="863" y="108" width="1" height="1" fill="#10107f" opacity="0.6"/>
<rect x="864" y="108" width="1" height="1" fill="#10107f" opacity="0.6"/>
<rect x="865" y="108" width="1" height="1" fill="#10107f" opacity="0.6"/>
<rect x="866" y="107" width="1" height="2" fill="#10107f" opacity="0.5"/>
<rect x="867" y="108" width="1" height="1" fill="#10107f" opacity="0.6"/>
<rect x="868" y="107" width="1" height="2" fill="#10107f" opacity="0.5"/>
<rect x="869" y="108" width="1" height="1" fill="#10107f" opacity="0.6"/>
<rect x="870" y="107" width="1" height="2" fill="#10107f" opacity="0.5"/>
<rect x="871" y="108" width="1" height="1" fill="#10107f" opacity="0.6"/>
<rect x="872" y="108" width="1" height="1" fill="#10107f" opacity="0.6"/>
<rect x="873" y="107" width="1" height="2" fill="#10107f" opacity="0.5"/>
<rect x="874" y="107" width="1" height="2" fill="#10107f" opacity="0.5"/>
<rect x="875" y="107" width="1" height="2" fill="#10107f" opacity="0.5"/>
<rect x="876" y="108" width="1" height="1" fill="#10107f" opacity="0.6"/>
<rect x="877" y="108" width="1" height="1" fill="#10107f" opacity="0.6"/>
<rect x="878" y="107" width="1" height="2" fill="#333333" opacity="0.5"/>
<rect x="879" y="108" width="1" height="1" fill="#333333" opacity="0.6"/>
<rect x="880" y="108" width="1" height="1" fill="#333333" opacity="0.6"/>
<rect x="881" y="107" width="1" height="2" fill="#333333" opacity="0.5"/>
<rect x="882" y="108" width="1" height="1" fill="#333333" opacity="0.6"/>
<rect x="883" y="108" width="1" height="1" fill="#333333" opacity="0.6"/>
<rect x="884" y="108" width="1" height="1" fill="#333333" opacity="0.6"/>
<rect x="885" y="107" width="1" height="2" fill="#333333" opacity="0.5"/>
<rect x="886" y="108" width="1" height="1" fill="#333333" opacity="0.6"/>
<rect x="887" y="108" width="1" height="1" fill="#333333" opacity="0.6"/>
<rect x="888" y="107" width="1" height="2" fill="#333333" opacity="0.5"/>
<rect x="889" y="108" width="1" height="1" fill="#333333" opacity="0.6"/>
<rect x="890" y="107" width="1" height="2" fill="#333333" opacity="0.5"/>
<rect x="891" y="107" width="1" height="2" fill="#000000" opacity="0.5"/>
<rect x="892" y="107" width="1" height="2" fill="#ff4500" opacity="0.5"/>
<rect x="893" y="108" width="1" height="1" fill="#ff4500" opacity="0.6"/>
<rect x="894" y="108" width="1" height="1" fill="#ff4500" opacity="0.6"/>
<rect x="895" y="107" width="1" height="2" fill="#ff4500" opacity="0.5"/>
<rect x="896" y="108" width="1" height="1" fill="#ff4500" opacity="0.6"/>
<rect x="897" y="107" width="1" height="2" fill="#000000" opacity="0.5"/>
<rect x="843" y="109" width="1" height="2" fill="#000000" opacity="0.5"/>
<rect x="844" y="109" width="1" height="2" fill="#ff4500" opacity="0.5"/>
<rect x="845" y="110" width="1" height="1" fill="#ff4500" opacity="0.6"/>
<rect x="846" y="109" width="1" height="2" fill="#ff4500" opacity="0.5"/>
<rect x="847" y="110" width="1" height="1" fill="#ff4500" opacity="0.6"/>
<rect x="848" y="109" width="1" height="2" fill="#ff4500" opacity="0.5"/>
<rect x="850" y="110" width="1" height="1" fill="#a3a3a3" opacity="0.6"/>
<rect x="852" y="109" width="1" height="2" fill="#0000ff" opacity="0.5"/>
<rect x="853" y="110" width="1" height="1" fill="#0000ff" opacity="0.6"/>
<rect x="854" y="110" width="1" height="1" fill="#0000ff" opacity="0.6"/>
<rect x="855" y="110" width="1" height="1" fill="#0000ff" opacity="0.6"/>
<rect x="856" y="109" width="1" height="2" fill="#0000ff" opacity="0.5"/>
<rect x="857" y="109" width="1" height="2" fill="#0000ff" opacity="0.5"/>
<rect x="858" y="109" width="1" height="2" fill="#0000ff" opacity="0.5"/>
<rect x="859" y="110" width="1" height="1" fill="#0000ff" opacity="0.6"/>
<rect x="860" y="110" width="1" height="1" fill="#0000ff" opacity="0.6"/>
<rect x="861" y="109" width="1" height="2" fill="#0000ff" opacity="0.5"/>
<rect x="863" y="109" width="1" height="2" fill="#333333" opacity="0.5"/>
<rect x="864" y="109" width="1" height="2" fill="#333333" opacity="0.5"/>
<rect x="865" y="110" width="1" height="1" fill="#333333" opacity="0.6"/>
<rect x="866" y="109" width="1" height="2" fill="#333333" opacity="0.5"/>
<rect x="867" y="110" width="1" height="1" fill="#333333" opacity="0.6"/>
<rect x="868" y="110" width="1" height="1" fill="#333333" opacity="0.6"/>
<rect x="869" y="110" width="1" height="1" fill="#333333" opacity="0.6"/>
<rect x="870" y="109" width="1" height="2" fill="#333333" opacity="0.5"/>
<rect x="871" y="110" width="1" height="1" fill="#333333" opacity="0.6"/>
<rect x="872" y="110" width="1" height="1" fill="#333333" opacity="0.6"/>
<rect x="873" y="110" width="1" height="1" fill="#333333" opacity="0.6"/>
<rect x="874" y="109" width="1" height="2" fill="#333333" opacity="0.5"/>
<rect x="875" y="110" width="1" height="1" fill="#333333" opacity="0.6"/>
<rect x="876" y="109" width="1" height="2" fill="#333333" opacity="0.5"/>
<rect x="877" y="110" width="1" height="1" fill="#333333" opacity="0.6"/>
<rect x="878" y="109" width="1" height="2" fill="#333333" opacity="0.5"/>
<rect x="879" y="110" width="1" height="1" fill="#333333" opacity="0.6"/>
<rect x="880" y="109" width="1" height="2" fill="#333333" opacity="0.5"/>
<rect x="881" y="110" width="1" height="1" fill="#333333" opacity="0.6"/>
<rect x="882" y="109" width="1" height="2" fill="#333333" opacity="0.5"/>
<rect x="883" y="109" width="1" height="2" fill="#333333" opacity="0.5"/>
<rect x="884" y="109" width="1" height="2" fill="#800080" opacity="0.5"/>
<rect x="885" y="110" width="1" height="1" fill="#a3a3a3" opacity="0.6"/>
<rect x="887" y="109" width="1" height="2" fill="#800080" opacity="0.5"/>
<rect x="888" y="109" width="1" height="2" fill="#000000" opacity="0.5"/>
<rect x="843" y="111" width="1" height="2" fill="#000000" opacity="0.5"/>
<rect x="844" y="111" width="1" height="2" fill="#ff4500" opacity="0.5"/>
<rect x="845" y="112" width="1" height="1" fill="#ff4500" opacity="0.6"/>
<rect x="846" y="112" width="1" height="1" fill="#ff4500" opacity="0.6"/>
<rect x="847" y="111" width="1" height="2" fill="#ff4500" opacity="0.5"/>
<rect x="848" y="111" width="1" height="2" fill="#ff4500" opacity="0.5"/>
<rect x="849" y="111" width="1" height="2" fill="#ff4500" opacity="0.5"/>
<rect x="850" y="112" width="1" height="1" fill="#ff4500" opacity="0.6"/>
<rect x="851" y="112" width="1" height="1" fill="#ff4500" opacity="0.6"/>
<rect x="852" y="111" width="1" height="2" fill="#ff4500" opacity="0.5"/>
<rect x="853" y="112" width="1" height="1" fill="#ff4500" opacity="0.6"/>
<rect x="854" y="111" width="1" height="2" fill="#ff4500" opacity="0.5"/>
<rect x="855" y="111" width="1" height="2" fill="#ff4500" opacity="0.5"/>
<rect x="856" y="111" width="1" height="2" fill="#ff4500" opacity="0.5"/>
<rect x="857" y="112" width="1" height="1" fill="#ff4500" opacity="0.6"/>
<rect x="858" y="112" width="1" height="1" fill="#ff4500" opacity="0.6"/>
<rect x="859" y="112" width="1" height="1" fill="#ff4500" opacity="0.6"/>
<rect x="860" y="111" width="1" height="2" fill="#ff4500" opacity="0.5"/>
<rect x="861" y="112" width="1" height="1" fill="#ff4500" opacity="0.6"/>
<rect x="862" y="112" width="1" height="1" fill="#ff4500" opacity="0.6"/>
<rect x="863" y="112" width="1" height="1" fill="#ff4500" opacity="0.6"/>
<rect x="864" y="112" width="1" height="1" fill="#ff4500" opacity="0.6"/>
<rect x="865" y="112" width="1" height="1" fill="#ff4500" opacity="0.6"/>
<rect x="866" y="111" width="1" height="2" fill="#000000" opacity="0.5"/>
<rect x="867" y="111" width="1" height="2" fill="#000000" opacity="0.5"/>
<rect x="868" y="111" width="1" height="2" fill="#ff4500" opacity="0.5"/>
<rect x="869" y="112" width="1" height="1" fill="#ff4500" opacity="0.6"/>
<rect x="870" y="111" width="1" height="2" fill="#ff4500" opacity="0.5"/>
<rect x="871" y="112" width="1" height="1" fill="#ff4500" opacity="0.6"/>
<rect x="872" y="111" width="1" height="2" fill="#ff4500" opacity="0.5"/>
<rect x="873" y="112" width="1" height="1" fill="#a3a3a3" opacity="0.6"/>
<rect x="875" y="111" width="1" height="2" fill="#000000" opacity="0.5"/>
<rect x="876" y="111" width="1" height="2" fill="#ff4500" opacity="0.5"/>
<rect x="877" y="112" width="1" height="1" fill="#ff4500" opacity="0.6"/>
<rect x="878" y="111" width="1" height="2" fill="#ff4500" opacity="0.5"/>
<rect x="879" y="112" width="1" height="1" fill="#ff4500" opacity="0.6"/>
<rect x="880" y="111" width="1" height="2" fill="#ff4500" opacity="0.5"/>
<rect x="881" y="112" width="1" height="1" fill="#a3a3a3" opacity="0.6"/>
<rect x="883" y="111" width="1" height="2" fill="#000000" opacity="0.5"/>
<rect x="884" y="111" width="1" height="2" fill="#ff4500" opacity="0.5"/>
<rect x="885" y="112" width="1" height="1" fill="#ff4500" opacity="0.6"/>
<rect x="886" y="112" width="1" height="1" fill="#ff4500" opacity="0.6"/>
<rect x="887" y="111" width="1" height="2" fill="#ff4500" opacity="0.5"/>
<rect x="888" y="112" width="1" height="1" fill="#ff4500" opacity="0.6"/>
<rect x="889" y="112" width="1" height="1" fill="#ff4500" opacity="0.6"/>
<rect x="890" y="111" width="1" height="2" fill="#ff4500" opacity="0.5"/>
<rect x="891" y="111" width="1" height="2" fill="#ff4500" opacity="0.5"/>
<rect x="892" y="112" width="1" height="1" fill="#ff4500" opacity="0.6"/>
<rect x="893" y="112" width="1" height="1" fill="#ff4500" opacity="0.6"/>
<rect x="894" y="111" width="1" height="2" fill="#000000" opacity="0.5"/>
<rect x="895" y="112" width="1" height="1" fill="#000000" opacity="0.6"/>
<rect x="843" y="113" width="1" height="2" fill="#000000" opacity="0.5"/>
<rect x="844" y="114" width="1" height="1" fill="#ff4500" opacity="0.6"/>
<rect x="845" y="114" width="1" height="1" fill="#ff4500" opacity="0.6"/>
<rect x="846" y="114" width="1" height="1" fill="#ff4500" opacity="0.6"/>
<rect x="847" y="114" width="1" height="1" fill="#ff4500" opacity="0.6"/>
<rect x="848" y="114" width="1" height="1" fill="#ff4500" opacity="0.6"/>
<rect x="849" y="114" width="1" height="1" fill="#ff4500" opacity="0.6"/>
<rect x="850" y="113" width="1" height="2" fill="#ff4500" opacity="0.5"/>
<rect x="851" y="114" width="1" height="1" fill="#ff4500" opacity="0.6"/>
<rect x="852" y="114" width="1" height="1" fill="#ff4500" opacity="0.6"/>
<rect x="853" y="114" width="1" height="1" fill="#ff4500" opacity="0.6"/>
<rect x="854" y="113" width="1" height="2" fill="#ff4500" opacity="0.5"/>
<rect x="855" y="114" width="1" height="1" fill="#ff4500" opacity="0.6"/>
<rect x="857" y="114" width="1" height="1" fill="#a3a3a3" opacity="0.6"/>
<rect x="859" y="113" width="1" height="2" fill="#0000ff" opacity="0.5"/>
<rect x="860" y="114" width="1" height="1" fill="#0000ff" opacity="0.6"/>
<rect x="861" y="114" width="1" height="1" fill="#0000ff" opacity="0.6"/>
<rect x="862" y="114" width="1" height="1" fill="#0000ff" opacity="0.6"/>
<rect x="863" y="113" width="1" height="2" fill="#0000ff" opacity="0.5"/>
<rect x="864" y="113" width="1" height="2" fill="#0000ff" opacity="0.5"/>
<rect x="865" y="113" width="1" height="2" fill="#0000ff" opacity="0.5"/>
<rect x="866" y="114" width="1" height="1" fill="#0000ff" opacity="0.6"/>
<rect x="867" y="114" width="1" height="1" fill="#0000ff" opacity="0.6"/>
<rect x="868" y="113" width="1" height="2" fill="#0000ff" opacity="0.5"/>
<rect x="870" y="113" width="1" height="2" fill="#333333" opacity="0.5"/>
<rect x="871" y="113" width="1" height="2" fill="#333333" opacity="0.5"/>
<rect x="872" y="114" width="1" height="1" fill="#333333" opacity="0.6"/>
<rect x="873" y="113" width="1" height="2" fill="#333333" opacity="0.5"/>
<rect x="874" y="114" width="1" height="1" fill="#333333" opacity="0.6"/>
<rect x="875" y="114" width="1" height="1" fill="#333333" opacity="0.6"/>
<rect x="876" y="114" width="1" height="1" fill="#333333" opacity="0.6"/>
<rect x="877" y="113" width="1" height="2" fill="#333333" opacity="0.5"/>
<rect x="878" y="114" width="1" height="1" fill="#333333" opacity="0.6"/>
<rect x="879" y="114" width="1" height="1" fill="#333333" opacity="0.6"/>
<rect x="880" y="114" width="1" height="1" fill="#333333" opacity="0.6"/>
<rect x="881" y="113" width="1" height="2" fill="#333333" opacity="0.5"/>
<rect x="882" y="114" width="1" height="1" fill="#333333" opacity="0.6"/>
<rect x="883" y="113" width="1" height="2" fill="#333333" opacity="0.5"/>
<rect x="884" y="114" width="1" height="1" fill="#333333" opacity="0.6"/>
<rect x="885" y="113" width="1" height="2" fill="#333333" opacity="0.5"/>
<rect x="886" y="114" width="1" height="1" fill="#333333" opacity="0.6"/>
<rect x="887" y="114" width="1" height="1" fill="#333333" opacity="0.6"/>
<rect x="888" y="113" width="1" height="2" fill="#333333" opacity="0.5"/>
<rect x="889" y="114" width="1" height="1" fill="#333333" opacity="0.6"/>
<rect x="890" y="114" width="1" height="1" fill="#333333" opacity="0.6"/>
<rect x="891" y="113" width="1" height="2" fill="#333333" opacity="0.5"/>
<rect x="892" y="113" width="1" height="2" fill="#333333" opacity="0.5"/>
<rect x="893" y="114" width="1" height="1" fill="#333333" opacity="0.6"/>
<rect x="894" y="113" width="1" height="2" fill="#333333" opacity="0.5"/>
<rect x="895" y="113" width="1" height="2" fill="#000000" opacity="0.5"/>
<rect x="896" y="113" width="1" height="2" fill="#10107f" opacity="0.5"/>
<rect x="897" y="113" width="1" height="2" fill="#10107f" opacity="0.5"/>
<rect x="898" y="114" width="1" height="1" fill="#10107f" opacity="0.6"/>
<rect x="899" y="113" width="1" height="2" fill="#10107f" opacity="0.5"/>
<rect x="900" y="114" width="1" height="1" fill="#10107f" opacity="0.6"/>
<rect x="901" y="114" width="1" height="1" fill="#10107f" opacity="0.6"/>
<rect x="902" y="114" width="1" height="1" fill="#10107f" opacity="0.6"/>
<rect x="903" y="113" width="1" height="2" fill="#10107f" opacity="0.5"/>
<rect x="904" y="113" width="1" height="2" fill="#10107f" opacity="0.5"/>
<rect x="905" y="114" width="1" height="1" fill="#10107f" opacity="0.6"/>
<rect x="906" y="113" width="1" height="2" fill="#10107f" opacity="0.5"/>
<rect x="907" y="114" width="1" height="1" fill="#10107f" opacity="0.6"/>
<rect x="908" y="114" width="1" height="1" fill="#10107f" opacity="0.6"/>
<rect x="909" y="114" width="1" height="1" fill="#10107f" opacity="0.6"/>
<rect x="910" y="114" width="1" height="1" fill="#10107f" opacity="0.6"/>
<rect x="911" y="113" width="1" height="2" fill="#10107f" opacity="0.5"/>
<rect x="912" y="114" width="1" height="1" fill="#10107f" opacity="0.6"/>
<rect x="913" y="114" width="1" height="1" fill="#10107f" opacity="0.6"/>
<rect x="843" y="115" width="1" height="2" fill="#007400" opacity="0.5"/>
<rect x="845" y="115" width="1" height="2" fill="#007400" opacity="0.5"/>
<rect x="846" y="116" width="1" height="1" fill="#007400" opacity="0.6"/>
<rect x="847" y="115" width="1" height="2" fill="#007400" opacity="0.5"/>
<rect x="849" y="116" width="1" height="1" fill="#007400" opacity="0.6"/>
<rect x="851" y="116" width="1" height="1" fill="#007400" opacity="0.6"/>
<rect x="852" y="116" width="1" height="1" fill="#007400" opacity="0.6"/>
<rect x="853" y="116" width="1" height="1" fill="#007400" opacity="0.6"/>
<rect x="854" y="116" width="1" height="1" fill="#007400" opacity="0.6"/>
<rect x="855" y="116" width="1" height="1" fill="#007400" opacity="0.6"/>
<rect x="856" y="116" width="1" height="1" fill="#007400" opacity="0.6"/>
<rect x="857" y="116" width="1" height="1" fill="#007400" opacity="0.6"/>
<rect x="858" y="115" width="1" height="2" fill="#007400" opacity="0.5"/>
<rect x="859" y="116" width="1" height="1" fill="#007400" opacity="0.6"/>
<rect x="860" y="115" width="1" height="2" fill="#007400" opacity="0.5"/>
<rect x="843" y="117" width="1" height="2" fill="#000000" opacity="0.5"/>
<rect x="844" y="117" width="1" height="2" fill="#10107f" opacity="0.5"/>
<rect x="845" y="117" width="1" height="2" fill="#10107f" opacity="0.5"/>
<rect x="846" y="118" width="1" height="1" fill="#10107f" opacity="0.6"/>
<rect x="847" y="117" width="1" height="2" fill="#10107f" opacity="0.5"/>
<rect x="848" y="118" width="1" height="1" fill="#10107f" opacity="0.6"/>
<rect x="849" y="118" width="1" height="1" fill="#10107f" opacity="0.6"/>
<rect x="850" y="118" width="1" height="1" fill="#10107f" opacity="0.6"/>
<rect x="851" y="117" width="1" height="2" fill="#10107f" opacity="0.5"/>
<rect x="852" y="117" width="1" height="2" fill="#10107f" opacity="0.5"/>
<rect x="853" y="118" width="1" height="1" fill="#10107f" opacity="0.6"/>
<rect x="854" y="117" width="1" height="2" fill="#10107f" opacity="0.5"/>
<rect x="855" y="118" width="1" height="1" fill="#10107f" opacity="0.6"/>
<rect x="856" y="118" width="1" height="1" fill="#10107f" opacity="0.6"/>
<rect x="857" y="118" width="1" height="1" fill="#10107f" opacity="0.6"/>
<rect x="858" y="118" width="1" height="1" fill="#10107f" opacity="0.6"/>
<rect x="859" y="117" width="1" height="2" fill="#10107f" opacity="0.5"/>
<rect x="860" y="118" width="1" height="1" fill="#10107f" opacity="0.6"/>
<rect x="861" y="118" width="1" height="1" fill="#10107f" opacity="0.6"/>
<rect x="862" y="118" width="1" height="1" fill="#10107f" opacity="0.6"/>
<rect x="863" y="118" width="1" height="1" fill="#10107f" opacity="0.6"/>
<rect x="864" y="118" width="1" height="1" fill="#10107f" opacity="0.6"/>
<rect x="865" y="117" width="1" height="2" fill="#10107f" opacity="0.5"/>
<rect x="866" y="118" width="1" height="1" fill="#10107f" opacity="0.6"/>
<rect x="867" y="118" width="1" height="1" fill="#10107f" opacity="0.6"/>
<rect x="868" y="118" width="1" height="1" fill="#10107f" opacity="0.6"/>
<rect x="869" y="118" width="1" height="1" fill="#10107f" opacity="0.6"/>
<rect x="870" y="118" width="1" height="1" fill="#10107f" opacity="0.6"/>
<rect x="871" y="118" width="1" height="1" fill="#10107f" opacity="0.6"/>
<rect x="872" y="117" width="1" height="2" fill="#333333" opacity="0.5"/>
<rect x="873" y="118" width="1" height="1" fill="#333333" opacity="0.6"/>
<rect x="874" y="118" width="1" height="1" fill="#333333" opacity="0.6"/>
<rect x="875" y="117" width="1" height="2" fill="#333333" opacity="0.5"/>
<rect x="876" y="118" width="1" height="1" fill="#333333" opacity="0.6"/>
<rect x="877" y="117" width="1" height="2" fill="#333333" opacity="0.5"/>
<rect x="878" y="118" width="1" height="1" fill="#333333" opacity="0.6"/>
<rect x="879" y="118" width="1" height="1" fill="#333333" opacity="0.6"/>
<rect x="880" y="117" width="1" height="2" fill="#333333" opacity="0.5"/>
<rect x="881" y="117" width="1" height="2" fill="#333333" opacity="0.5"/>
<rect x="882" y="118" width="1" height="1" fill="#333333" opacity="0.6"/>
<rect x="883" y="117" width="1" height="2" fill="#333333" opacity="0.5"/>
<rect x="884" y="118" width="1" height="1" fill="#333333" opacity="0.6"/>
<rect x="885" y="118" width="1" height="1" fill="#333333" opacity="0.6"/>
<rect x="886" y="118" width="1" height="1" fill="#333333" opacity="0.6"/>
<rect x="887" y="117" width="1" height="2" fill="#333333" opacity="0.5"/>
<rect x="888" y="117" width="1" height="2" fill="#000000" opacity="0.5"/>
<rect x="889" y="117" width="1" height="2" fill="#ff4500" opacity="0.5"/>
<rect x="890" y="118" width="1" height="1" fill="#ff4500" opacity="0.6"/>
<rect x="891" y="118" width="1" height="1" fill="#ff4500" opacity="0.6"/>
<rect x="892" y="117" width="1" height="2" fill="#ff4500" opacity="0.5"/>
<rect x="893" y="117" width="1" height="2" fill="#ff4500" opacity="0.5"/>
<rect x="894" y="117" width="1" height="2" fill="#ff4500" opacity="0.5"/>
<rect x="895" y="118" width="1" height="1" fill="#ff4500" opacity="0.6"/>
<rect x="896" y="118" width="1" height="1" fill="#a3a3a3" opacity="0.6"/>
<rect x="898" y="117" width="1" height="2" fill="#000000" opacity="0.5"/>
<rect x="899" y="118" width="1" height="1" fill="#ff4500" opacity="0.6"/>
<rect x="900" y="118" width="1" height="1" fill="#ff4500" opacity="0.6"/>
<rect x="901" y="118" width="1" height="1" fill="#ff4500" opacity="0.6"/>
<rect x="902" y="118" width="1" height="1" fill="#ff4500" opacity="0.6"/>
<rect x="903" y="118" width="1" height="1" fill="#ff4500" opacity="0.6"/>
<rect x="904" y="118" width="1" height="1" fill="#ff4500" opacity="0.6"/>
<rect x="905" y="117" width="1" height="2" fill="#ff4500" opacity="0.5"/>
<rect x="906" y="118" width="1" height="1" fill="#ff4500" opacity="0.6"/>
<rect x="907" y="118" width="1" height="1" fill="#ff4500" opacity="0.6"/>
<rect x="908" y="118" width="1" height="1" fill="#ff4500" opacity="0.6"/>
<rect x="909" y="117" width="1" height="2" fill="#ff4500" opacity="0.5"/>
<rect x="910" y="118" width="1" height="1" fill="#ff4500" opacity="0.6"/>
<rect x="911" y="117" width="1" height="2" fill="#000000" opacity="0.5"/>
<rect x="843" y="119" width="1" height="2" fill="#000000" opacity="0.5"/>
<rect x="844" y="120" width="1" height="1" fill="#ff4500" opacity="0.6"/>
<rect x="845" y="120" width="1" height="1" fill="#ff4500" opacity="0.6"/>
<rect x="846" y="120" width="1" height="1" fill="#ff4500" opacity="0.6"/>
<rect x="847" y="120" width="1" height="1" fill="#ff4500" opacity="0.6"/>
<rect x="848" y="120" width="1" height="1" fill="#ff4500" opacity="0.6"/>
<rect x="849" y="120" width="1" height="1" fill="#ff4500" opacity="0.6"/>
<rect x="850" y="120" width="1" height="1" fill="#ff4500" opacity="0.6"/>
<rect x="851" y="119" width="1" height="2" fill="#ff4500" opacity="0.5"/>
<rect x="852" y="119" width="1" height="2" fill="#ff4500" opacity="0.5"/>
<rect x="853" y="119" width="1" height="2" fill="#ff4500" opacity="0.5"/>
<rect x="854" y="120" width="1" height="1" fill="#ff4500" opacity="0.6"/>
<rect x="856" y="120" width="1" height="1" fill="#a3a3a3" opacity="0.6"/>
<rect x="858" y="119" width="1" height="2" fill="#000000" opacity="0.5"/>
<rect x="859" y="119" width="1" height="2" fill="#000000" opacity="0.5"/>
<rect x="860" y="119" width="1" height="2" fill="#ff4500" opacity="0.5"/>
<rect x="861" y="120" width="1" height="1" fill="#ff4500" opacity="0.6"/>
<rect x="862" y="119" width="1" height="2" fill="#ff4500" opacity="0.5"/>
<rect x="863" y="119" width="1" height="2" fill="#ff4500" opacity="0.5"/>
<rect x="864" y="119" width="1" height="2" fill="#a31515" opacity="0.5"/>
<rect x="865" y="119" width="1" height="2" fill="#000000" opacity="0.5"/>
<rect x="867" y="120" width="1" height="1" fill="#a3a3a3" opacity="0.6"/>
<rect x="869" y="119" width="1" height="2" fill="#000000" opacity="0.5"/>
<rect x="870" y="120" width="1" height="1" fill="#ff4500" opacity="0.6"/>
<rect x="871" y="120" width="1" height="1" fill="#ff4500" opacity="0.6"/>
<rect x="872" y="120" width="1" height="1" fill="#ff4500" opacity="0.6"/>
<rect x="873" y="120" width="1" height="1" fill="#ff4500" opacity="0.6"/>
<rect x="874" y="120" width="1" height="1" fill="#ff4500" opacity="0.6"/>
<rect x="875" y="120" width="1" height="1" fill="#ff4500" opacity="0.6"/>
<rect x="876" y="120" width="1" height="1" fill="#ff4500" opacity="0.6"/>
<rect x="877" y="119" width="1" height="2" fill="#ff4500" opacity="0.5"/>
<rect x="878" y="120" width="1" height="1" fill="#ff4500" opacity="0.6"/>
<rect x="879" y="119" width="1" height="2" fill="#ff4500" opacity="0.5"/>
<rect x="880" y="120" width="1" height="1" fill="#ff4500" opacity="0.6"/>
<rect x="881" y="120" width="1" height="1" fill="#ff4500" opacity="0.6"/>
<rect x="882" y="120" width="1" height="1" fill="#ff4500" opacity="0.6"/>
<rect x="883" y="120" width="1" height="1" fill="#ff4500" opacity="0.6"/>
<rect x="884" y="120" width="1" height="1" fill="#ff4500" opacity="0.6"/>
<rect x="885" y="120" width="1" height="1" fill="#ff4500" opacity="0.6"/>
<rect x="887" y="120" width="1" height="1" fill="#a3a3a3" opacity="0.6"/>
<rect x="889" y="119" width="1" height="2" fill="#000000" opacity="0.5"/>
<rect x="890" y="120" width="1" height="1" fill="#a31515" opacity="0.6"/>
<rect x="891" y="119" width="1" height="2" fill="#000000" opacity="0.5"/>
<rect x="893" y="120" width="1" height="1" fill="#a3a3a3" opacity="0.6"/>
<rect x="895" y="119" width="1" height="2" fill="#000000" opacity="0.5"/>
<rect x="896" y="120" width="1" height="1" fill="#ff4500" opacity="0.6"/>
<rect x="897" y="120" width="1" height="1" fill="#ff4500" opacity="0.6"/>
<rect x="898" y="120" width="1" height="1" fill="#ff4500" opacity="0.6"/>
<rect x="899" y="120" width="1" height="1" fill="#ff4500" opacity="0.6"/>
<rect x="900" y="120" width="1" height="1" fill="#ff4500" opacity="0.6"/>
<rect x="901" y="120" width="1" height="1" fill="#ff4500" opacity="0.6"/>
<rect x="902" y="120" width="1" height="1" fill="#ff4500" opacity="0.6"/>
<rect x="903" y="120" width="1" height="1" fill="#ff4500" opacity="0.6"/>
<rect x="904" y="120" width="1" height="1" fill="#ff4500" opacity="0.6"/>
<rect x="905" y="120" width="1" height="1" fill="#ff4500" opacity="0.6"/>
<rect x="906" y="120" width="1" height="1" fill="#ff4500" opacity="0.6"/>
<rect x="907" y="120" width="1" height="1" fill="#ff4500" opacity="0.6"/>
<rect x="909" y="120" width="1" height="1" fill="#a3a3a3" opacity="0.6"/>
<rect x="911" y="119" width="1" height="2" fill="#000000" opacity="0.5"/>
<rect x="912" y="120" width="1" height="1" fill="#a31515" opacity="0.6"/>
<rect x="913" y="119" width="1" height="2" fill="#000000" opacity="0.5"/>
<rect x="843" y="121" width="1" height="2" fill="#007400" opacity="0.5"/>
<rect x="845" y="121" width="1" height="2" fill="#007400" opacity="0.5"/>
<rect x="846" y="122" width="1" height="1" fill="#007400" opacity="0.6"/>
<rect x="847" y="122" width="1" height="1" fill="#007400" opacity="0.6"/>
<rect x="848" y="122" width="1" height="1" fill="#007400" opacity="0.6"/>
<rect x="850" y="121" width="1" height="2" fill="#007400" opacity="0.5"/>
<rect x="851" y="121" width="1" height="2" fill="#007400" opacity="0.5"/>
<rect x="852" y="122" width="1" height="1" fill="#007400" opacity="0.6"/>
<rect x="854" y="122" width="1" height="1" fill="#007400" opacity="0.6"/>
<rect x="855" y="122" width="1" height="1" fill="#007400" opacity="0.6"/>
<rect x="856" y="122" width="1" height="1" fill="#007400" opacity="0.6"/>
<rect x="857" y="122" width="1" height="1" fill="#007400" opacity="0.6"/>
<rect x="858" y="122" width="1" height="1" fill="#007400" opacity="0.6"/>
<rect x="859" y="122" width="1" height="1" fill="#007400" opacity="0.6"/>
<rect x="860" y="122" width="1" height="1" fill="#007400" opacity="0.6"/>
<rect x="861" y="121" width="1" height="2" fill="#007400" opacity="0.5"/>
<rect x="862" y="122" width="1" height="1" fill="#007400" opacity="0.6"/>
<rect x="863" y="121" width="1" height="2" fill="#007400" opacity="0.5"/>
<rect x="865" y="122" width="1" height="1" fill="#007400" opacity="0.6"/>
<rect x="866" y="122" width="1" height="1" fill="#007400" opacity="0.6"/>
<rect x="868" y="122" width="1" height="1" fill="#007400" opacity="0.6"/>
<rect x="870" y="121" width="1" height="2" fill="#007400" opacity="0.5"/>
<rect x="871" y="121" width="1" height="2" fill="#007400" opacity="0.5"/>
<rect x="872" y="121" width="1" height="2" fill="#007400" opacity="0.5"/>
<rect x="874" y="121" width="1" height="2" fill="#007400" opacity="0.5"/>
<rect x="875" y="121" width="1" height="2" fill="#007400" opacity="0.5"/>
<rect x="876" y="121" width="1" height="2" fill="#007400" opacity="0.5"/>
<rect x="877" y="122" width="1" height="1" fill="#007400" opacity="0.6"/>
<rect x="843" y="123" width="1" height="2" fill="#000000" opacity="0.5"/>
<rect x="844" y="123" width="1" height="2" fill="#ff4500" opacity="0.5"/>
<rect x="845" y="124" width="1" height="1" fill="#ff4500" opacity="0.6"/>
<rect x="846" y="124" width="1" height="1" fill="#ff4500" opacity="0.6"/>
<rect x="847" y="123" width="1" height="2" fill="#ff4500" opacity="0.5"/>
<rect x="848" y="124" width="1" height="1" fill="#ff4500" opacity="0.6"/>
<rect x="849" y="124" width="1" height="1" fill="#ff4500" opacity="0.6"/>
<rect x="850" y="123" width="1" height="2" fill="#ff4500" opacity="0.5"/>
<rect x="851" y="124" width="1" height="1" fill="#ff4500" opacity="0.6"/>
<rect x="852" y="124" width="1" height="1" fill="#ff4500" opacity="0.6"/>
<rect x="853" y="124" width="1" height="1" fill="#ff4500" opacity="0.6"/>
<rect x="854" y="123" width="1" height="2" fill="#000000" opacity="0.5"/>
<rect x="855" y="123" width="1" height="2" fill="#000000" opacity="0.5"/>
<rect x="856" y="124" width="1" height="1" fill="#ff4500" opacity="0.6"/>
<rect x="857" y="124" width="1" height="1" fill="#ff4500" opacity="0.6"/>
<rect x="858" y="124" width="1" height="1" fill="#ff4500" opacity="0.6"/>
<rect x="859" y="124" width="1" height="1" fill="#ff4500" opacity="0.6"/>
<rect x="860" y="124" width="1" height="1" fill="#ff4500" opacity="0.6"/>
<rect x="861" y="124" width="1" height="1" fill="#ff4500" opacity="0.6"/>
<rect x="862" y="124" width="1" height="1" fill="#ff4500" opacity="0.6"/>
<rect x="863" y="123" width="1" height="2" fill="#ff4500" opacity="0.5"/>
<rect x="864" y="123" width="1" height="2" fill="#ff4500" opacity="0.5"/>
<rect x="865" y="123" width="1" height="2" fill="#ff4500" opacity="0.5"/>
<rect x="866" y="124" width="1" height="1" fill="#ff4500" opacity="0.6"/>
<rect x="867" y="124" width="1" height="1" fill="#a3a3a3" opacity="0.6"/>
<rect x="869" y="123" width="1" height="2" fill="#000000" opacity="0.5"/>
<rect x="870" y="123" width="1" height="2" fill="#10107f" opacity="0.5"/>
<rect x="871" y="123" width="1" height="2" fill="#10107f" opacity="0.5"/>
<rect x="872" y="124" width="1" height="1" fill="#10107f" opacity="0.6"/>
<rect x="873" y="123" width="1" height="2" fill="#10107f" opacity="0.5"/>
<rect x="874" y="124" width="1" height="1" fill="#10107f" opacity="0.6"/>
<rect x="875" y="124" width="1" height="1" fill="#10107f" opacity="0.6"/>
<rect x="876" y="124" width="1" height="1" fill="#10107f" opacity="0.6"/>
<rect x="877" y="123" width="1" height="2" fill="#10107f" opacity="0.5"/>
<rect x="878" y="124" width="1" height="1" fill="#10107f" opacity="0.6"/>
<rect x="879" y="124" width="1" height="1" fill="#10107f" opacity="0.6"/>
<rect x="880" y="124" width="1" height="1" fill="#10107f" opacity="0.6"/>
<rect x="881" y="123" width="1" height="2" fill="#10107f" opacity="0.5"/>
<rect x="882" y="124" width="1" height="1" fill="#10107f" opacity="0.6"/>
<rect x="883" y="123" width="1" height="2" fill="#10107f" opacity="0.5"/>
<rect x="884" y="124" width="1" height="1" fill="#10107f" opacity="0.6"/>
<rect x="885" y="123" width="1" height="2" fill="#10107f" opacity="0.5"/>
<rect x="886" y="124" width="1" height="1" fill="#10107f" opacity="0.6"/>
<rect x="887" y="124" width="1" height="1" fill="#10107f" opacity="0.6"/>
<rect x="888" y="123" width="1" height="2" fill="#10107f" opacity="0.5"/>
<rect x="889" y="123" width="1" height="2" fill="#10107f" opacity="0.5"/>
<rect x="890" y="124" width="1" height="1" fill="#10107f" opacity="0.6"/>
<rect x="891" y="123" width="1" height="2" fill="#10107f" opacity="0.5"/>
<rect x="892" y="124" width="1" height="1" fill="#10107f" opacity="0.6"/>
<rect x="893" y="123" width="1" height="2" fill="#10107f" opacity="0.5"/>
<rect x="894" y="124" width="1" height="1" fill="#10107f" opacity="0.6"/>
<rect x="895" y="124" width="1" height="1" fill="#10107f" opacity="0.6"/>
<rect x="896" y="123" width="1" height="2" fill="#10107f" opacity="0.5"/>
<rect x="897" y="124" width="1" height="1" fill="#10107f" opacity="0.6"/>
<rect x="898" y="123" width="1" height="2" fill="#10107f" opacity="0.5"/>
<rect x="899" y="124" width="1" height="1" fill="#10107f" opacity="0.6"/>
<rect x="900" y="124" width="1" height="1" fill="#10107f" opacity="0.6"/>
<rect x="901" y="124" width="1" height="1" fill="#10107f" opacity="0.6"/>
<rect x="902" y="124" width="1" height="1" fill="#10107f" opacity="0.6"/>
<rect x="903" y="123" width="1" height="2" fill="#10107f" opacity="0.5"/>
<rect x="904" y="123" width="1" height="2" fill="#333333" opacity="0.5"/>
<rect x="905" y="124" width="1" height="1" fill="#333333" opacity="0.6"/>
<rect x="906" y="124" width="1" height="1" fill="#333333" opacity="0.6"/>
<rect x="907" y="123" width="1" height="2" fill="#333333" opacity="0.5"/>
<rect x="908" y="124" width="1" height="1" fill="#333333" opacity="0.6"/>
<rect x="909" y="123" width="1" height="2" fill="#333333" opacity="0.5"/>
<rect x="910" y="123" width="1" height="2" fill="#333333" opacity="0.5"/>
</g>
<defs><linearGradient id="mmshadow" x1="0" x2="1" y1="0" y2="0"><stop offset="0" stop-color="#000" stop-opacity="0"/><stop offset="1" stop-color="#000" stop-opacity="0.07"/></linearGradient></defs><rect x="839" y="87" width="4" height="339" fill="url(#mmshadow)"/>
<rect x="914" y="87" width="1" height="339" fill="#d0d0d0" />
<rect x="914" y="87" width="14" height="1" fill="#d0d0d0" />
<text x="294.5" y="449.3" font-size="11" fill="#6f6f6f" font-family="'Liberation Sans', sans-serif" textLength="54" lengthAdjust="spacingAndGlyphs" >PROBLEMS</text>
<text x="369.2" y="449.3" font-size="11" fill="#424242" font-family="'Liberation Sans', sans-serif" textLength="42" lengthAdjust="spacingAndGlyphs" >OUTPUT</text>
<rect x="369" y="458" width="43" height="1" fill="#b0b0b0" />
<circle cx="441.5" cy="444.5" r="1.3" fill="#424242"/>
<circle cx="446.5" cy="444.5" r="1.3" fill="#424242"/>
<circle cx="451.5" cy="444.5" r="1.3" fill="#424242"/>
<rect x="598.5" y="434.5" width="159" height="20" fill="#ffffff" stroke="#cecece" stroke-width="1"/>
<text x="603" y="450" font-size="13" fill="#000000" font-family="'Liberation Sans', sans-serif" textLength="30.5" lengthAdjust="spacingAndGlyphs" >Tasks</text>
<path d="M745 441 L751.4 441 L748.2 447 Z" fill="#111"/>
<g><path d="M775.5 438.5 L780 443.2 M780 438.5 L775.5 443.2" stroke="#c5282f" stroke-width="1.6"/><rect x="782" y="438.3" width="7" height="1.6" fill="#333"/><rect x="782" y="441.8" width="7" height="1.6" fill="#333"/><rect x="775.8" y="446.4" width="13.2" height="1.7" fill="#333"/><rect x="775.8" y="450.1" width="13.2" height="1.7" fill="#333"/></g>
<g fill="none" stroke="#333" stroke-width="1.2"><rect x="808.3" y="444.6" width="9.3" height="7"/><path d="M815.6 444.6 V440.8 a2.6 2.6 0 0 1 5.2 0 V443.4"/></g><rect x="812.3" y="446.6" width="1.2" height="2.8" fill="#555"/>
<g fill="none" stroke="#c8c8c8" stroke-width="1.2"><path d="M841.8 443.5 V450 H850.6 V442.3 L847.8 439.5 H845.5"/><path d="M847.5 439.5 V442.5 H850.6" /></g><path d="M839 441.3 H844.5 M842.3 439 L844.8 441.3 L842.3 443.6" fill="none" stroke="#7aaad6" stroke-width="1.5"/>
<path d="M871.5 448.5 L878 442 L884.5 448.5" fill="none" stroke="#333333" stroke-width="1.5"/>
<path d="M906 441 L914 449 M914 441 L906 449" stroke="#333333" stroke-width="2.3"/>
<rect x="294" y="461" width="2" height="16" fill="#000000" />
<rect x="914" y="461" width="1" height="159" fill="#d8d8d8" />
<rect x="914" y="461" width="14" height="1" fill="#d8d8d8" />
<g fill="none" stroke="#ffffff"><path d="M16.9 626.5 V634.5" stroke-width="1.9"/><circle cx="16.6" cy="625.8" r="1.2" stroke-width="1.1"/><circle cx="16.6" cy="635.3" r="1.2" stroke-width="1.1"/><circle cx="22" cy="628" r="1.7" stroke-width="1.1"/><path d="M21.2 629.8 Q20.3 631.6 17.6 632.4" stroke-width="1.6"/></g>
<text x="27" y="635" font-size="12" fill="#ffffff" font-family="'Liberation Sans', sans-serif" textLength="36.5" lengthAdjust="spacingAndGlyphs" >master</text>
<path d="M83 633.3 H80.3 Q79.7 633.3 79.7 632.4 V630 Q79.7 628.8 80.9 628.8 H83.3 V627.3 Q83.3 625.7 85 625.7 H87 Q88.6 625.7 88.6 627.3 V628.8 H91.3 Q92.5 628.8 92.5 630 V632.4 Q92.5 633.3 91.8 633.3 H89" fill="none" stroke="#ffffff" stroke-width="1.3"/><rect x="85" y="629.5" width="1.9" height="6.3" fill="#ffffff"/><path d="M83.3 631.9 L85.95 628.8 L88.6 631.9" fill="none" stroke="#ffffff" stroke-width="1.4"/>
<circle cx="116" cy="630.5" r="6" fill="#ffffff"/><path d="M113.2 627.7 L118.8 633.3 M118.8 627.7 L113.2 633.3" stroke="#999" stroke-width="1.3"/>
<text x="126.5" y="635" font-size="12" fill="#ffffff" font-family="'Liberation Sans', sans-serif" textLength="6" lengthAdjust="spacingAndGlyphs" >0</text>
<path d="M142 624 L148 636.5 L136 636.5 Z" fill="#ffffff"/><rect x="141.3" y="628" width="1.4" height="5" fill="#999"/><rect x="141.3" y="634" width="1.4" height="1.2" fill="#999"/>
<text x="152.3" y="635" font-size="12" fill="#ffffff" font-family="'Liberation Sans', sans-serif" textLength="6" lengthAdjust="spacingAndGlyphs" >0</text>
<text x="572" y="635" font-size="12" fill="#ffffff" font-family="'Liberation Sans', sans-serif" textLength="54.5" lengthAdjust="spacingAndGlyphs" >Ln 1, Col 1</text>
<text x="643.5" y="635" font-size="12" fill="#ffffff" font-family="'Liberation Sans', sans-serif" textLength="47" lengthAdjust="spacingAndGlyphs" >Spaces: 4</text>
<text x="707" y="635" font-size="12" fill="#ffffff" font-family="'Liberation Sans', sans-serif" textLength="31.5" lengthAdjust="spacingAndGlyphs" >UTF-8</text>
<text x="754.3" y="635" font-size="12" fill="#ffffff" font-family="'Liberation Sans', sans-serif" textLength="26.5" lengthAdjust="spacingAndGlyphs" >CRLF</text>
<text x="797" y="635" font-size="12" fill="#ffffff" font-family="'Liberation Sans', sans-serif" textLength="58" lengthAdjust="spacingAndGlyphs" >PowerShell</text>
<circle cx="878.2" cy="630.4" r="6.1" fill="#ffffff"/><circle cx="876.1" cy="628" r="0.95" fill="#999"/><circle cx="880.3" cy="628" r="0.95" fill="#999"/><path d="M874.8 631.2 Q878.2 635 881.6 631.2" fill="none" stroke="#999" stroke-width="1.1"/>
<path d="M906.5 623.9 L909.6 627.6 V631.8 L912.2 633.9 H900.8 L903.4 631.8 V627.6 Z" fill="#ffffff"/><path d="M904.9 634.4 H908.1 L906.5 636.7 Z" fill="#ffffff"/></svg>
</body></html>
